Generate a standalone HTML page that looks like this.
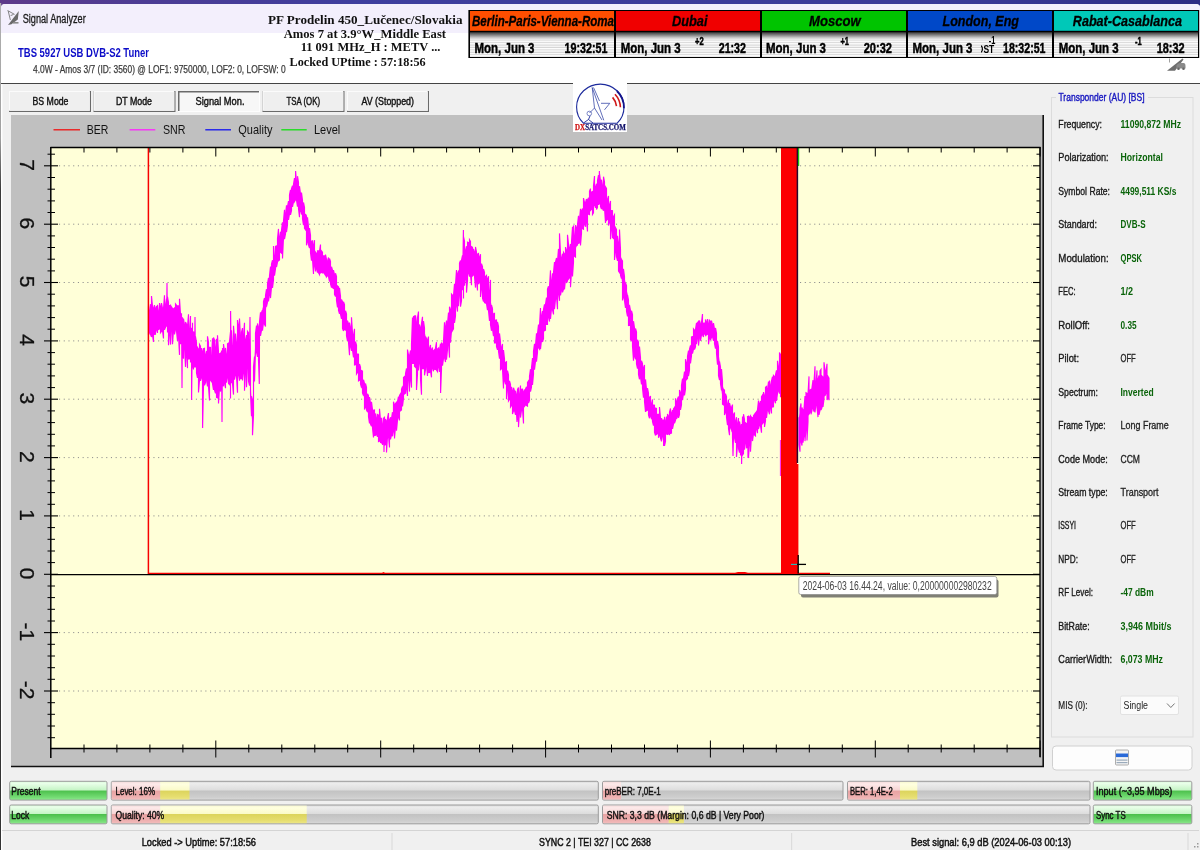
<!DOCTYPE html>
<html lang="en"><head><meta charset="utf-8"><title>Signal Analyzer</title>
<style>
html,body{margin:0;padding:0;background:#f0f0f0;overflow:hidden}
body{width:1200px;height:850px;position:relative;font-family:"Liberation Sans",Arial,sans-serif}
svg{position:absolute;left:0;top:0;display:block;filter:blur(0.3px)}
text{white-space:pre}
</style></head><body>
<svg width="1200" height="850" viewBox="0 0 1200 850">
<defs>
<linearGradient id="gGreen" x1="0" y1="0" x2="0" y2="1">
<stop offset="0" stop-color="#d6f8d6"/><stop offset="0.1" stop-color="#eaffea"/><stop offset="0.48" stop-color="#c4f4c4"/><stop offset="0.5" stop-color="#4cc04c"/><stop offset="0.85" stop-color="#74dc74"/><stop offset="1" stop-color="#8ee88e"/>
</linearGradient>
<linearGradient id="gGray" x1="0" y1="0" x2="0" y2="1">
<stop offset="0" stop-color="#d8d8d8"/><stop offset="0.12" stop-color="#ececec"/><stop offset="0.48" stop-color="#dcdcdc"/><stop offset="0.5" stop-color="#c2c2c2"/><stop offset="0.85" stop-color="#cecece"/><stop offset="1" stop-color="#dadada"/>
</linearGradient>
<linearGradient id="gRed" x1="0" y1="0" x2="0" y2="1">
<stop offset="0" stop-color="#f6dcdc"/><stop offset="0.12" stop-color="#fdeaea"/><stop offset="0.48" stop-color="#f6d2d2"/><stop offset="0.5" stop-color="#e8a2a2"/><stop offset="0.85" stop-color="#eeb0b0"/><stop offset="1" stop-color="#f2bcbc"/>
</linearGradient>
<linearGradient id="gYel" x1="0" y1="0" x2="0" y2="1">
<stop offset="0" stop-color="#f8f8d0"/><stop offset="0.12" stop-color="#ffffe0"/><stop offset="0.48" stop-color="#fafac8"/><stop offset="0.5" stop-color="#dcd45c"/><stop offset="0.85" stop-color="#e6de70"/><stop offset="1" stop-color="#ece684"/>
</linearGradient>
<linearGradient id="gShade" x1="0" y1="0" x2="0" y2="1">
<stop offset="0" stop-color="#484848"/><stop offset="0.3" stop-color="#8c8c8c"/><stop offset="0.6" stop-color="#cfcfcf"/><stop offset="0.85" stop-color="#f0f0f0" stop-opacity="0.8"/><stop offset="1" stop-color="#ffffff" stop-opacity="0"/>
</linearGradient>
<pattern id="stripes" x="0" y="0" width="4" height="2.4" patternUnits="userSpaceOnUse">
<rect x="0" y="0" width="4" height="2.4" fill="#fff"/><rect x="0" y="1.3" width="4" height="1.1" fill="#d2d2d2"/>
</pattern>
</defs>

<linearGradient id="gDesk" x1="0" y1="0" x2="1" y2="0"><stop offset="0" stop-color="#5e3a8a"/><stop offset="0.12" stop-color="#4c3c94"/><stop offset="0.3" stop-color="#3e3e9e"/><stop offset="0.8" stop-color="#3a3a98"/><stop offset="1" stop-color="#2c2c84"/></linearGradient>
<linearGradient id="gEdge" x1="0" y1="0" x2="0" y2="1"><stop offset="0" stop-color="#b0b0b0"/><stop offset="0.16" stop-color="#a0a0a0"/><stop offset="0.22" stop-color="#3a3a3a"/><stop offset="1" stop-color="#333"/></linearGradient>
<rect x="0.0" y="0.0" width="1200.0" height="850.0" fill="url(#gDesk)"/>
<rect x="0.0" y="3.0" width="1.2" height="847.0" fill="url(#gEdge)"/>
<path d="M1 850 V8 Q1 4 5 4 H1196 Q1200.2 4 1200.2 8.5 V850 Z" fill="#f0f0f0"/>
<path d="M1 33.7 V8 Q1 4 5 4 H1196 Q1200.2 4 1200.2 8.5 V33.7 Z" fill="#f3effc"/>
<rect x="1.0" y="33.0" width="1199.0" height="50.0" fill="#ffffff"/>
<rect x="1.0" y="83.0" width="1.4" height="767.0" fill="#ffffff"/>
<line x1="1.0" y1="83.5" x2="1200.0" y2="83.5" stroke="#444" stroke-width="1.2"/>
<g><path d="M18.8 11 L8 25 L11.5 24.3 L17.8 19.5 Z" fill="#6a6a6a"/><path d="M7.5 10.5 L14.6 14.4 M8.2 11 L10.4 20 M10.6 15.6 l3 -1.2" stroke="#777" stroke-width="0.9" fill="none"/><path d="M13 22 h5.5 v1.6 h-5.5z" fill="#888"/></g>
<text x="22.7" y="23.0" font-family="Liberation Sans, Arial, sans-serif" font-size="12.0" font-weight="normal" font-style="normal" fill="#1a1a1a" textLength="63.0" lengthAdjust="spacingAndGlyphs" stroke="#1a1a1a" stroke-width="0.3">Signal Analyzer</text>
<text x="18.0" y="56.5" font-family="Liberation Sans, Arial, sans-serif" font-size="12.5" font-weight="bold" font-style="normal" fill="#0c0cc8" textLength="131.0" lengthAdjust="spacingAndGlyphs">TBS 5927 USB DVB-S2 Tuner</text>
<text x="33.0" y="73.0" font-family="Liberation Sans, Arial, sans-serif" font-size="10.5" font-weight="normal" font-style="normal" fill="#3c3c3c" textLength="252.7" lengthAdjust="spacingAndGlyphs" stroke="#3c3c3c" stroke-width="0.25">4.0W - Amos 3/7 (ID: 3560) @ LOF1: 9750000, LOF2: 0, LOFSW: 0</text>
<text x="268.0" y="23.8" font-family="Liberation Serif, Times New Roman, serif" font-size="13.0" font-weight="bold" font-style="normal" fill="#111" textLength="194.5" lengthAdjust="spacingAndGlyphs">PF Prodelin 450_Lučenec/Slovakia</text>
<text x="283.7" y="37.5" font-family="Liberation Serif, Times New Roman, serif" font-size="13.0" font-weight="bold" font-style="normal" fill="#111" textLength="162.3" lengthAdjust="spacingAndGlyphs">Amos 7 at 3.9°W_Middle East</text>
<text x="300.7" y="51.0" font-family="Liberation Serif, Times New Roman, serif" font-size="13.0" font-weight="bold" font-style="normal" fill="#111" textLength="139.8" lengthAdjust="spacingAndGlyphs">11 091 MHz_H : METV ...</text>
<text x="289.5" y="65.5" font-family="Liberation Serif, Times New Roman, serif" font-size="13.0" font-weight="bold" font-style="normal" fill="#111" textLength="136.2" lengthAdjust="spacingAndGlyphs">Locked UPtime : 57:18:56</text>
<rect x="468.4" y="10.0" width="730.8" height="48.0" fill="#000"/>
<rect x="470.0" y="11.0" width="144.0" height="19.8" fill="#ff4e00"/>
<rect x="470.0" y="32.8" width="144.0" height="24.2" fill="url(#stripes)"/>
<rect x="470.0" y="32.8" width="144.0" height="8.5" fill="url(#gShade)"/>
<rect x="616.0" y="11.0" width="144.0" height="19.8" fill="#f00000"/>
<rect x="616.0" y="32.8" width="144.0" height="24.2" fill="url(#stripes)"/>
<rect x="616.0" y="32.8" width="144.0" height="8.5" fill="url(#gShade)"/>
<rect x="762.0" y="11.0" width="144.0" height="19.8" fill="#00c400"/>
<rect x="762.0" y="32.8" width="144.0" height="24.2" fill="url(#stripes)"/>
<rect x="762.0" y="32.8" width="144.0" height="8.5" fill="url(#gShade)"/>
<rect x="908.0" y="11.0" width="144.0" height="19.8" fill="#0048c8"/>
<rect x="908.0" y="32.8" width="144.0" height="24.2" fill="url(#stripes)"/>
<rect x="908.0" y="32.8" width="144.0" height="8.5" fill="url(#gShade)"/>
<rect x="1054.0" y="11.0" width="144.0" height="19.8" fill="#00c8b8"/>
<rect x="1054.0" y="32.8" width="144.0" height="24.2" fill="url(#stripes)"/>
<rect x="1054.0" y="32.8" width="144.0" height="8.5" fill="url(#gShade)"/>
<text x="472.0" y="25.6" font-family="Liberation Sans, Arial, sans-serif" font-size="14.8" font-weight="bold" font-style="italic" fill="#000" textLength="142.0" lengthAdjust="spacingAndGlyphs" stroke="#000" stroke-width="0.3">Berlin-Paris-Vienna-Roma</text>
<text x="672.0" y="25.6" font-family="Liberation Sans, Arial, sans-serif" font-size="14.8" font-weight="bold" font-style="italic" fill="#000" textLength="35.5" lengthAdjust="spacingAndGlyphs" stroke="#000" stroke-width="0.3">Dubai</text>
<text x="809.0" y="25.6" font-family="Liberation Sans, Arial, sans-serif" font-size="14.8" font-weight="bold" font-style="italic" fill="#000" textLength="51.7" lengthAdjust="spacingAndGlyphs" stroke="#000" stroke-width="0.3">Moscow</text>
<text x="942.5" y="25.6" font-family="Liberation Sans, Arial, sans-serif" font-size="14.8" font-weight="bold" font-style="italic" fill="#000" textLength="76.5" lengthAdjust="spacingAndGlyphs" stroke="#000" stroke-width="0.3">London, Eng</text>
<text x="1072.8" y="25.6" font-family="Liberation Sans, Arial, sans-serif" font-size="14.8" font-weight="bold" font-style="italic" fill="#000" textLength="109.2" lengthAdjust="spacingAndGlyphs" stroke="#000" stroke-width="0.3">Rabat-Casablanca</text>
<text x="474.5" y="52.5" font-family="Liberation Sans, Arial, sans-serif" font-size="15.0" font-weight="bold" font-style="normal" fill="#000" textLength="60.0" lengthAdjust="spacingAndGlyphs" stroke="#000" stroke-width="0.45">Mon, Jun 3</text>
<text x="564.5" y="52.5" font-family="Liberation Sans, Arial, sans-serif" font-size="15.0" font-weight="bold" font-style="normal" fill="#000" textLength="43.0" lengthAdjust="spacingAndGlyphs" stroke="#000" stroke-width="0.45">19:32:51</text>
<text x="620.7" y="52.5" font-family="Liberation Sans, Arial, sans-serif" font-size="15.0" font-weight="bold" font-style="normal" fill="#000" textLength="60.0" lengthAdjust="spacingAndGlyphs" stroke="#000" stroke-width="0.45">Mon, Jun 3</text>
<text x="695.0" y="44.5" font-family="Liberation Sans, Arial, sans-serif" font-size="10.0" font-weight="bold" font-style="normal" fill="#000" textLength="8.7" lengthAdjust="spacingAndGlyphs" stroke="#000" stroke-width="0.45">+2</text>
<text x="718.7" y="52.5" font-family="Liberation Sans, Arial, sans-serif" font-size="15.0" font-weight="bold" font-style="normal" fill="#000" textLength="27.3" lengthAdjust="spacingAndGlyphs" stroke="#000" stroke-width="0.45">21:32</text>
<text x="766.0" y="52.5" font-family="Liberation Sans, Arial, sans-serif" font-size="15.0" font-weight="bold" font-style="normal" fill="#000" textLength="60.0" lengthAdjust="spacingAndGlyphs" stroke="#000" stroke-width="0.45">Mon, Jun 3</text>
<text x="840.5" y="44.5" font-family="Liberation Sans, Arial, sans-serif" font-size="10.0" font-weight="bold" font-style="normal" fill="#000" textLength="8.5" lengthAdjust="spacingAndGlyphs" stroke="#000" stroke-width="0.45">+1</text>
<text x="863.7" y="52.5" font-family="Liberation Sans, Arial, sans-serif" font-size="15.0" font-weight="bold" font-style="normal" fill="#000" textLength="28.3" lengthAdjust="spacingAndGlyphs" stroke="#000" stroke-width="0.45">20:32</text>
<text x="912.5" y="52.5" font-family="Liberation Sans, Arial, sans-serif" font-size="15.0" font-weight="bold" font-style="normal" fill="#000" textLength="60.0" lengthAdjust="spacingAndGlyphs" stroke="#000" stroke-width="0.45">Mon, Jun 3</text>
<text x="988.8" y="43.8" font-family="Liberation Sans, Arial, sans-serif" font-size="10.0" font-weight="bold" font-style="normal" fill="#000" textLength="6.6" lengthAdjust="spacingAndGlyphs">-1</text>
<clipPath id="cDST"><rect x="981" y="44" width="16" height="12"/></clipPath>
<text x="977.3" y="53.4" font-family="Liberation Sans, Arial, sans-serif" font-size="10.5" font-weight="bold" font-style="normal" fill="#000" textLength="16.9" lengthAdjust="spacingAndGlyphs" clip-path="url(#cDST)">DST</text>
<text x="1003.0" y="52.5" font-family="Liberation Sans, Arial, sans-serif" font-size="15.0" font-weight="bold" font-style="normal" fill="#000" textLength="42.5" lengthAdjust="spacingAndGlyphs" stroke="#000" stroke-width="0.45">18:32:51</text>
<text x="1058.7" y="52.5" font-family="Liberation Sans, Arial, sans-serif" font-size="15.0" font-weight="bold" font-style="normal" fill="#000" textLength="60.0" lengthAdjust="spacingAndGlyphs" stroke="#000" stroke-width="0.45">Mon, Jun 3</text>
<text x="1135.0" y="44.5" font-family="Liberation Sans, Arial, sans-serif" font-size="10.0" font-weight="bold" font-style="normal" fill="#000" textLength="6.7" lengthAdjust="spacingAndGlyphs" stroke="#000" stroke-width="0.45">-1</text>
<text x="1156.7" y="52.5" font-family="Liberation Sans, Arial, sans-serif" font-size="15.0" font-weight="bold" font-style="normal" fill="#000" textLength="28.0" lengthAdjust="spacingAndGlyphs" stroke="#000" stroke-width="0.45">18:32</text>
<g fill="#6e6e6e"><path d="M1167 70.8 L1182.5 58.6 L1183.5 59.6 L1175 70.8 Z"/><path d="M1169.5 58.5 v4" stroke="#888" stroke-width="0.8"/><path d="M1176.5 65.5 q1 -2.5 3.5 -2.5 h3.5 q2 0 2 3 v2.5 h-9z" fill="#8a8a8a"/><circle cx="1178.5" cy="68.8" r="1.3" fill="#666"/><circle cx="1183.5" cy="68.8" r="1.3" fill="#666"/></g>
<rect x="9.0" y="91.0" width="82.0" height="21.0" fill="#6a6a6a"/>
<rect x="9.0" y="91.0" width="80.8" height="19.8" fill="#fbfbfb"/>
<rect x="10.0" y="92.0" width="79.8" height="18.8" fill="#efefef"/>
<text x="32.5" y="104.5" font-family="Liberation Sans, Arial, sans-serif" font-size="10.5" font-weight="normal" font-style="normal" fill="#111" textLength="36.0" lengthAdjust="spacingAndGlyphs" stroke="#111" stroke-width="0.4">BS Mode</text>
<rect x="93.5" y="91.0" width="82.0" height="21.0" fill="#6a6a6a"/>
<rect x="93.5" y="91.0" width="80.8" height="19.8" fill="#fbfbfb"/>
<rect x="94.5" y="92.0" width="79.8" height="18.8" fill="#efefef"/>
<text x="116.0" y="104.5" font-family="Liberation Sans, Arial, sans-serif" font-size="10.5" font-weight="normal" font-style="normal" fill="#111" textLength="36.0" lengthAdjust="spacingAndGlyphs" stroke="#111" stroke-width="0.4">DT Mode</text>
<rect x="178.0" y="91.0" width="82.0" height="21.0" fill="#fdfdfd"/>
<rect x="178.0" y="91.0" width="81.0" height="20.0" fill="#6a6a6a"/>
<rect x="179.5" y="92.5" width="79.5" height="18.5" fill="#f7f7f7"/>
<text x="195.5" y="105.0" font-family="Liberation Sans, Arial, sans-serif" font-size="10.5" font-weight="normal" font-style="normal" fill="#111" textLength="49.0" lengthAdjust="spacingAndGlyphs" stroke="#111" stroke-width="0.4">Signal Mon.</text>
<rect x="262.5" y="91.0" width="82.0" height="21.0" fill="#6a6a6a"/>
<rect x="262.5" y="91.0" width="80.8" height="19.8" fill="#fbfbfb"/>
<rect x="263.5" y="92.0" width="79.8" height="18.8" fill="#efefef"/>
<text x="286.5" y="104.5" font-family="Liberation Sans, Arial, sans-serif" font-size="10.5" font-weight="normal" font-style="normal" fill="#111" textLength="33.5" lengthAdjust="spacingAndGlyphs" stroke="#111" stroke-width="0.4">TSA (OK)</text>
<rect x="347.0" y="91.0" width="82.0" height="21.0" fill="#6a6a6a"/>
<rect x="347.0" y="91.0" width="80.8" height="19.8" fill="#fbfbfb"/>
<rect x="348.0" y="92.0" width="79.8" height="18.8" fill="#efefef"/>
<text x="361.5" y="104.5" font-family="Liberation Sans, Arial, sans-serif" font-size="10.5" font-weight="normal" font-style="normal" fill="#111" textLength="52.5" lengthAdjust="spacingAndGlyphs" stroke="#111" stroke-width="0.4">AV (Stopped)</text>
<rect x="11.0" y="115.0" width="1032.0" height="651.5" fill="#c0c0c0"/>
<line x1="11.0" y1="766.5" x2="1044.0" y2="766.5" stroke="#111" stroke-width="1.6"/>
<line x1="1043.2" y1="115.0" x2="1043.2" y2="767.0" stroke="#111" stroke-width="1.6"/>
<rect x="51.0" y="147.5" width="989.0" height="601.0" fill="#ffffd8"/>
<line x1="59.0" y1="691.0" x2="1032.0" y2="691.0" stroke="#8c8c8c" stroke-width="1" stroke-dasharray="1.1 3.62"/>
<line x1="59.0" y1="632.6" x2="1032.0" y2="632.6" stroke="#8c8c8c" stroke-width="1" stroke-dasharray="1.1 3.62"/>
<line x1="59.0" y1="515.9" x2="1032.0" y2="515.9" stroke="#8c8c8c" stroke-width="1" stroke-dasharray="1.1 3.62"/>
<line x1="59.0" y1="457.6" x2="1032.0" y2="457.6" stroke="#8c8c8c" stroke-width="1" stroke-dasharray="1.1 3.62"/>
<line x1="59.0" y1="399.2" x2="1032.0" y2="399.2" stroke="#8c8c8c" stroke-width="1" stroke-dasharray="1.1 3.62"/>
<line x1="59.0" y1="340.9" x2="1032.0" y2="340.9" stroke="#8c8c8c" stroke-width="1" stroke-dasharray="1.1 3.62"/>
<line x1="59.0" y1="282.5" x2="1032.0" y2="282.5" stroke="#8c8c8c" stroke-width="1" stroke-dasharray="1.1 3.62"/>
<line x1="59.0" y1="224.2" x2="1032.0" y2="224.2" stroke="#8c8c8c" stroke-width="1" stroke-dasharray="1.1 3.62"/>
<line x1="59.0" y1="165.8" x2="1032.0" y2="165.8" stroke="#8c8c8c" stroke-width="1" stroke-dasharray="1.1 3.62"/>
<line x1="53.5" y1="129.8" x2="80.0" y2="129.8" stroke="#f01010" stroke-width="1.3"/>
<text x="86.7" y="134.2" font-family="Liberation Sans, Arial, sans-serif" font-size="13.0" font-weight="normal" font-style="normal" fill="#111" textLength="21.6" lengthAdjust="spacingAndGlyphs">BER</text>
<line x1="129.6" y1="129.8" x2="155.3" y2="129.8" stroke="#ff20ff" stroke-width="1.3"/>
<text x="163.0" y="134.2" font-family="Liberation Sans, Arial, sans-serif" font-size="13.0" font-weight="normal" font-style="normal" fill="#111" textLength="22.5" lengthAdjust="spacingAndGlyphs">SNR</text>
<line x1="205.3" y1="129.8" x2="231.0" y2="129.8" stroke="#1010f0" stroke-width="1.3"/>
<text x="238.3" y="134.2" font-family="Liberation Sans, Arial, sans-serif" font-size="13.0" font-weight="normal" font-style="normal" fill="#111" textLength="34.2" lengthAdjust="spacingAndGlyphs">Quality</text>
<line x1="281.3" y1="129.8" x2="306.7" y2="129.8" stroke="#10e010" stroke-width="1.3"/>
<text x="314.0" y="134.2" font-family="Liberation Sans, Arial, sans-serif" font-size="13.0" font-weight="normal" font-style="normal" fill="#111" textLength="26.3" lengthAdjust="spacingAndGlyphs">Level</text>
<polygon points="148.5,315.4 149.5,314.6 150.5,314.8 151.5,315.8 152.5,315.8 153.5,315.6 154.5,314.7 155.5,315.3 156.5,314.0 157.5,314.0 158.5,313.0 159.5,313.2 160.5,314.6 161.5,313.6 162.5,313.3 163.5,311.5 164.5,311.1 165.5,311.7 166.5,309.6 167.5,310.5 168.5,310.7 169.5,310.4 170.5,312.4 171.5,312.3 172.5,312.4 173.5,312.4 174.5,314.3 175.5,315.6 176.5,316.9 177.5,316.7 178.5,318.0 179.5,320.0 180.5,321.8 181.5,322.7 182.5,325.2 183.5,327.9 184.5,327.9 185.5,329.0 186.5,331.9 187.5,334.6 188.5,335.8 189.5,337.8 190.5,339.3 191.5,340.2 192.5,342.8 193.5,343.1 194.5,344.0 195.5,347.3 196.5,348.9 197.5,349.0 198.5,353.1 199.5,354.8 200.5,355.6 201.5,359.2 202.5,359.9 203.5,359.2 204.5,360.7 205.5,360.5 206.5,360.0 207.5,360.3 208.5,362.0 209.5,363.1 210.5,363.5 211.5,363.2 212.5,363.1 213.5,364.4 214.5,364.3 215.5,364.4 216.5,362.1 217.5,362.8 218.5,362.0 219.5,360.1 220.5,360.9 221.5,361.7 222.5,360.4 223.5,358.4 224.5,360.6 225.5,358.4 226.5,357.7 227.5,357.1 228.5,355.4 229.5,356.8 230.5,356.5 231.5,354.6 232.5,354.6 233.5,352.4 234.5,351.6 235.5,351.0 236.5,352.3 237.5,351.1 238.5,351.5 239.5,349.9 240.5,346.8 241.5,346.1 242.5,345.3 243.5,347.3 244.5,347.1 245.5,345.5 246.5,344.6 247.5,344.9 248.5,346.2 249.5,358.7 250.5,373.8 251.5,403.6 252.5,414.4 253.5,383.3 254.5,360.6 255.5,335.8 256.5,335.8 257.5,331.9 258.5,330.6 259.5,325.0 260.5,321.8 261.5,317.7 262.5,308.6 263.5,305.2 264.5,300.9 265.5,294.9 266.5,292.1 267.5,287.4 268.5,282.7 269.5,278.4 270.5,273.4 271.5,268.8 272.5,265.4 273.5,261.2 274.5,257.3 275.5,253.6 276.5,251.1 277.5,246.7 278.5,241.0 279.5,238.4 280.5,233.7 281.5,231.2 282.5,226.9 283.5,221.4 284.5,218.1 285.5,213.2 286.5,210.2 287.5,206.6 288.5,202.9 289.5,199.0 290.5,194.5 291.5,190.0 292.5,187.9 293.5,184.8 294.5,184.3 295.5,182.0 296.5,184.4 297.5,185.4 298.5,189.9 299.5,191.4 300.5,194.2 301.5,199.9 302.5,203.3 303.5,205.6 304.5,211.9 305.5,214.8 306.5,219.9 307.5,222.8 308.5,227.7 309.5,233.6 310.5,236.3 311.5,242.2 312.5,243.8 313.5,248.2 314.5,251.0 315.5,253.0 316.5,254.2 317.5,253.9 318.5,256.3 319.5,255.9 320.5,257.7 321.5,256.9 322.5,259.1 323.5,258.4 324.5,260.4 325.5,261.1 326.5,260.8 327.5,261.2 328.5,263.5 329.5,265.2 330.5,268.6 331.5,271.1 332.5,272.8 333.5,274.0 334.5,277.1 335.5,280.4 336.5,284.1 337.5,286.2 338.5,291.1 339.5,292.5 340.5,296.2 341.5,300.5 342.5,304.3 343.5,306.8 344.5,311.3 345.5,313.6 346.5,317.9 347.5,322.4 348.5,325.4 349.5,327.6 350.5,330.9 351.5,331.4 352.5,336.5 353.5,340.6 354.5,345.1 355.5,349.0 356.5,351.1 357.5,357.3 358.5,361.3 359.5,366.3 360.5,369.1 361.5,374.0 362.5,378.7 363.5,382.6 364.5,386.9 365.5,390.3 366.5,393.1 367.5,395.6 368.5,398.7 369.5,402.6 370.5,403.9 371.5,407.7 372.5,412.6 373.5,413.2 374.5,415.7 375.5,418.5 376.5,418.5 377.5,418.8 378.5,420.5 379.5,421.3 380.5,423.7 381.5,425.1 382.5,426.3 383.5,426.1 384.5,425.9 385.5,425.2 386.5,423.3 387.5,423.1 388.5,421.5 389.5,420.3 390.5,421.0 391.5,418.2 392.5,416.3 393.5,414.4 394.5,411.9 395.5,408.6 396.5,406.3 397.5,405.2 398.5,400.9 399.5,398.9 400.5,397.0 401.5,391.0 402.5,386.8 403.5,383.1 404.5,379.1 405.5,373.6 406.5,369.2 407.5,367.9 408.5,361.6 409.5,359.3 410.5,356.6 411.5,347.4 412.5,332.9 413.5,327.4 414.5,327.6 415.5,326.7 416.5,330.4 417.5,328.2 418.5,331.6 419.5,329.2 420.5,331.8 421.5,331.3 422.5,333.9 423.5,329.3 424.5,331.3 425.5,335.9 426.5,342.7 427.5,342.9 428.5,347.2 429.5,349.1 430.5,351.3 431.5,352.2 432.5,353.4 433.5,353.2 434.5,354.3 435.5,353.4 436.5,353.8 437.5,351.6 438.5,351.0 439.5,349.8 440.5,348.5 441.5,348.6 442.5,344.1 443.5,341.7 444.5,338.6 445.5,332.2 446.5,329.1 447.5,324.7 448.5,321.6 449.5,316.6 450.5,310.3 451.5,303.4 452.5,300.5 453.5,296.8 454.5,291.1 455.5,286.6 456.5,280.0 457.5,274.1 458.5,270.8 459.5,268.3 460.5,267.1 461.5,259.9 462.5,259.4 463.5,255.0 464.5,255.7 465.5,253.8 466.5,250.0 467.5,249.0 468.5,251.3 469.5,247.3 470.5,249.0 471.5,250.3 472.5,249.1 473.5,248.9 474.5,253.0 475.5,252.7 476.5,253.1 477.5,256.6 478.5,259.6 479.5,263.5 480.5,264.9 481.5,265.4 482.5,269.8 483.5,269.9 484.5,274.3 485.5,277.2 486.5,282.3 487.5,286.1 488.5,291.8 489.5,293.9 490.5,298.8 491.5,305.9 492.5,307.8 493.5,314.8 494.5,318.7 495.5,323.2 496.5,326.1 497.5,331.5 498.5,335.2 499.5,338.3 500.5,342.3 501.5,347.6 502.5,350.4 503.5,355.2 504.5,361.5 505.5,365.5 506.5,369.2 507.5,374.4 508.5,377.3 509.5,383.3 510.5,386.7 511.5,389.9 512.5,393.2 513.5,392.5 514.5,393.8 515.5,393.9 516.5,396.9 517.5,395.5 518.5,395.7 519.5,396.4 520.5,396.9 521.5,396.5 522.5,393.6 523.5,391.8 524.5,391.8 525.5,388.7 526.5,388.8 527.5,385.2 528.5,383.0 529.5,377.0 530.5,373.1 531.5,366.7 532.5,363.6 533.5,355.6 534.5,350.8 535.5,346.7 536.5,339.4 537.5,336.3 538.5,331.8 539.5,329.5 540.5,323.0 541.5,319.5 542.5,318.6 543.5,312.4 544.5,310.7 545.5,306.7 546.5,300.9 547.5,297.5 548.5,293.6 549.5,290.7 550.5,287.7 551.5,280.9 552.5,279.1 553.5,274.3 554.5,270.9 555.5,264.6 556.5,258.6 557.5,261.7 558.5,262.1 559.5,257.9 560.5,259.9 561.5,257.2 562.5,255.8 563.5,255.6 564.5,254.1 565.5,254.8 566.5,253.4 567.5,254.9 568.5,254.6 569.5,252.1 570.5,250.8 571.5,247.0 572.5,242.6 573.5,238.6 574.5,237.0 575.5,232.5 576.5,231.6 577.5,227.8 578.5,221.5 579.5,218.1 580.5,214.7 581.5,214.4 582.5,209.9 583.5,208.8 584.5,207.7 585.5,205.7 586.5,203.1 587.5,199.5 588.5,199.3 589.5,194.9 590.5,194.4 591.5,191.9 592.5,193.2 593.5,191.1 594.5,189.4 595.5,189.8 596.5,188.1 597.5,187.4 598.5,186.3 599.5,185.2 600.5,184.7 601.5,187.2 602.5,187.1 603.5,190.3 604.5,191.0 605.5,193.9 606.5,196.6 607.5,200.9 608.5,201.7 609.5,206.4 610.5,208.3 611.5,212.0 612.5,213.5 613.5,219.1 614.5,221.9 615.5,229.4 616.5,232.0 617.5,239.0 618.5,242.7 619.5,248.1 620.5,253.7 621.5,259.2 622.5,265.9 623.5,269.6 624.5,277.6 625.5,282.4 626.5,289.8 627.5,293.5 628.5,301.9 629.5,305.2 630.5,310.9 631.5,317.7 632.5,322.5 633.5,327.0 634.5,330.8 635.5,335.1 636.5,341.4 637.5,344.8 638.5,348.8 639.5,354.7 640.5,359.5 641.5,365.6 642.5,370.6 643.5,374.1 644.5,378.7 645.5,383.3 646.5,388.9 647.5,392.7 648.5,394.1 649.5,397.1 650.5,400.3 651.5,404.5 652.5,406.4 653.5,408.0 654.5,411.1 655.5,415.1 656.5,414.5 657.5,415.4 658.5,416.9 659.5,419.0 660.5,421.1 661.5,421.5 662.5,424.1 663.5,425.0 664.5,422.6 665.5,422.7 666.5,421.5 667.5,418.8 668.5,416.8 669.5,416.3 670.5,416.3 671.5,413.6 672.5,411.3 673.5,408.4 674.5,407.8 675.5,405.2 676.5,402.1 677.5,399.6 678.5,397.7 679.5,395.5 680.5,393.9 681.5,391.1 682.5,384.7 683.5,380.1 684.5,376.3 685.5,370.1 686.5,367.0 687.5,361.9 688.5,356.7 689.5,350.9 690.5,346.0 691.5,342.5 692.5,337.4 693.5,334.5 694.5,330.7 695.5,330.2 696.5,329.3 697.5,326.3 698.5,325.1 699.5,324.0 700.5,325.1 701.5,325.1 702.5,323.9 703.5,324.2 704.5,323.9 705.5,321.8 706.5,323.8 707.5,323.5 708.5,323.2 709.5,324.7 710.5,325.6 711.5,324.4 712.5,326.5 713.5,326.5 714.5,329.3 715.5,333.5 716.5,338.8 717.5,346.2 718.5,352.8 719.5,360.4 720.5,368.5 721.5,375.5 722.5,384.6 723.5,388.3 724.5,392.2 725.5,397.8 726.5,400.1 727.5,403.7 728.5,406.3 729.5,410.4 730.5,411.3 731.5,413.4 732.5,416.2 733.5,417.6 734.5,420.6 735.5,421.7 736.5,423.8 737.5,425.3 738.5,426.0 739.5,427.1 740.5,427.1 741.5,429.2 742.5,426.2 743.5,425.4 744.5,427.0 745.5,425.2 746.5,422.9 747.5,424.8 748.5,421.1 749.5,423.2 750.5,422.0 751.5,418.1 752.5,417.3 753.5,415.9 754.5,416.1 755.5,412.6 756.5,412.5 757.5,411.9 758.5,409.6 759.5,407.9 760.5,404.5 761.5,402.8 762.5,403.3 763.5,400.1 764.5,398.4 765.5,395.8 766.5,392.7 767.5,390.9 768.5,391.8 769.5,387.1 770.5,388.0 771.5,384.1 772.5,383.1 773.5,379.9 774.5,377.8 775.5,375.2 776.5,370.8 777.5,370.9 778.5,368.5 779.5,363.2 780.5,361.0 780.5,384.1 779.5,388.2 778.5,390.3 777.5,391.8 776.5,393.3 775.5,394.2 774.5,399.4 773.5,401.1 772.5,401.8 771.5,404.8 770.5,405.2 769.5,408.5 768.5,407.2 767.5,408.6 766.5,409.9 765.5,411.9 764.5,415.0 763.5,416.7 762.5,417.1 761.5,419.3 760.5,420.4 759.5,421.5 758.5,424.4 757.5,424.8 756.5,427.0 755.5,428.1 754.5,429.5 753.5,431.8 752.5,435.3 751.5,437.0 750.5,436.1 749.5,438.0 748.5,441.5 747.5,442.2 746.5,443.2 745.5,443.9 744.5,444.1 743.5,445.5 742.5,446.1 741.5,444.6 740.5,443.8 739.5,445.5 738.5,441.0 737.5,443.0 736.5,440.8 735.5,438.5 734.5,438.1 733.5,436.1 732.5,433.6 731.5,431.7 730.5,428.3 729.5,426.6 728.5,422.3 727.5,419.2 726.5,417.2 725.5,411.1 724.5,406.6 723.5,403.3 722.5,398.7 721.5,390.6 720.5,382.6 719.5,374.3 718.5,368.2 717.5,360.1 716.5,350.4 715.5,344.8 714.5,342.0 713.5,338.2 712.5,337.0 711.5,336.3 710.5,336.3 709.5,334.7 708.5,334.0 707.5,334.6 706.5,334.2 705.5,332.8 704.5,333.7 703.5,334.6 702.5,333.9 701.5,335.0 700.5,336.2 699.5,336.3 698.5,336.1 697.5,337.2 696.5,340.1 695.5,341.5 694.5,345.1 693.5,347.0 692.5,349.2 691.5,356.2 690.5,359.8 689.5,363.9 688.5,369.7 687.5,373.9 686.5,378.8 685.5,382.7 684.5,388.1 683.5,394.7 682.5,398.3 681.5,402.4 680.5,405.6 679.5,409.7 678.5,412.9 677.5,413.3 676.5,415.0 675.5,417.7 674.5,421.6 673.5,423.5 672.5,424.9 671.5,427.1 670.5,430.0 669.5,431.1 668.5,431.5 667.5,432.3 666.5,434.0 665.5,436.0 664.5,437.6 663.5,438.8 662.5,435.5 661.5,434.6 660.5,433.1 659.5,433.6 658.5,430.3 657.5,429.3 656.5,427.7 655.5,427.0 654.5,426.7 653.5,422.1 652.5,421.8 651.5,419.3 650.5,416.4 649.5,414.4 648.5,409.3 647.5,407.5 646.5,402.9 645.5,400.4 644.5,393.4 643.5,388.5 642.5,385.1 641.5,380.3 640.5,374.4 639.5,369.9 638.5,367.1 637.5,360.6 636.5,357.1 635.5,351.7 634.5,348.3 633.5,344.6 632.5,340.1 631.5,336.3 630.5,328.9 629.5,322.8 628.5,318.9 627.5,314.3 626.5,306.1 625.5,300.7 624.5,295.0 623.5,288.6 622.5,285.6 621.5,277.9 620.5,272.3 619.5,268.6 618.5,262.3 617.5,255.7 616.5,253.7 615.5,245.2 614.5,242.8 613.5,235.7 612.5,232.9 611.5,227.5 610.5,225.1 609.5,222.4 608.5,220.2 607.5,215.8 606.5,211.4 605.5,210.6 604.5,207.2 603.5,205.3 602.5,201.9 601.5,200.7 600.5,201.9 599.5,199.0 598.5,200.5 597.5,202.7 596.5,201.9 595.5,204.2 594.5,203.5 593.5,206.0 592.5,205.7 591.5,208.1 590.5,208.2 589.5,209.9 588.5,212.7 587.5,214.6 586.5,218.2 585.5,219.4 584.5,222.2 583.5,225.4 582.5,226.1 581.5,230.6 580.5,231.9 579.5,235.2 578.5,239.5 577.5,241.8 576.5,245.7 575.5,251.1 574.5,254.1 573.5,255.1 572.5,260.9 571.5,264.0 570.5,271.5 569.5,272.0 568.5,275.9 567.5,274.7 566.5,276.0 565.5,278.4 564.5,279.5 563.5,280.2 562.5,285.6 561.5,286.1 560.5,286.1 559.5,287.6 558.5,289.3 557.5,288.2 556.5,295.1 555.5,297.2 554.5,297.6 553.5,297.9 552.5,304.6 551.5,304.3 550.5,308.7 549.5,311.7 548.5,316.9 547.5,320.1 546.5,321.1 545.5,325.7 544.5,328.1 543.5,334.0 542.5,335.4 541.5,336.9 540.5,342.0 539.5,345.4 538.5,346.9 537.5,352.4 536.5,357.2 535.5,361.2 534.5,368.3 533.5,371.4 532.5,376.0 531.5,381.0 530.5,388.4 529.5,391.3 528.5,396.1 527.5,400.4 526.5,401.8 525.5,403.9 524.5,406.8 523.5,406.7 522.5,408.2 521.5,409.9 520.5,409.2 519.5,410.4 518.5,410.9 517.5,410.1 516.5,412.6 515.5,410.0 514.5,411.3 513.5,410.2 512.5,406.8 511.5,402.8 510.5,402.6 509.5,397.2 508.5,394.8 507.5,389.0 506.5,384.0 505.5,382.3 504.5,377.5 503.5,371.6 502.5,367.7 501.5,363.2 500.5,360.8 499.5,354.8 498.5,351.4 497.5,346.2 496.5,345.8 495.5,339.9 494.5,337.5 493.5,330.7 492.5,328.9 491.5,322.8 490.5,319.3 489.5,315.6 488.5,310.6 487.5,304.4 486.5,300.9 485.5,298.0 484.5,291.6 483.5,292.0 482.5,287.9 481.5,285.9 480.5,286.2 479.5,283.5 478.5,280.3 477.5,279.0 476.5,276.6 475.5,274.2 474.5,270.7 473.5,270.6 472.5,272.6 471.5,272.4 470.5,268.0 469.5,269.5 468.5,271.2 467.5,270.1 466.5,275.6 465.5,275.7 464.5,276.6 463.5,278.9 462.5,283.9 461.5,284.6 460.5,288.4 459.5,291.7 458.5,295.7 457.5,299.9 456.5,306.9 455.5,308.5 454.5,312.4 453.5,317.2 452.5,322.1 451.5,330.8 450.5,331.9 449.5,339.7 448.5,340.7 447.5,345.6 446.5,349.2 445.5,352.3 444.5,356.8 443.5,358.1 442.5,360.1 441.5,361.8 440.5,364.7 439.5,365.2 438.5,365.1 437.5,367.7 436.5,369.9 435.5,369.9 434.5,370.0 433.5,367.3 432.5,367.1 431.5,368.9 430.5,368.2 429.5,365.1 428.5,366.1 427.5,366.4 426.5,364.7 425.5,363.0 424.5,364.1 423.5,359.9 422.5,363.8 421.5,364.4 420.5,361.2 419.5,360.8 418.5,362.1 417.5,358.8 416.5,364.5 415.5,363.1 414.5,361.6 413.5,359.1 412.5,361.4 411.5,367.5 410.5,373.1 409.5,374.1 408.5,379.5 407.5,381.6 406.5,387.1 405.5,388.9 404.5,392.8 403.5,397.9 402.5,401.4 401.5,406.7 400.5,409.5 399.5,412.0 398.5,415.3 397.5,417.6 396.5,419.6 395.5,423.5 394.5,426.1 393.5,427.8 392.5,431.8 391.5,431.5 390.5,432.9 389.5,434.0 388.5,434.7 387.5,437.2 386.5,438.9 385.5,438.0 384.5,441.1 383.5,441.0 382.5,440.5 381.5,438.0 380.5,436.0 379.5,436.8 378.5,436.3 377.5,435.0 376.5,433.9 375.5,431.9 374.5,431.6 373.5,429.1 372.5,426.7 371.5,423.1 370.5,418.7 369.5,416.2 368.5,414.8 367.5,411.2 366.5,407.8 365.5,403.4 364.5,398.6 363.5,395.6 362.5,391.0 361.5,387.6 360.5,383.4 359.5,378.9 358.5,374.7 357.5,372.3 356.5,367.0 355.5,364.0 354.5,358.4 353.5,354.3 352.5,349.5 351.5,347.3 350.5,345.1 349.5,340.4 348.5,339.3 347.5,334.4 346.5,331.5 345.5,328.8 344.5,325.9 343.5,322.8 342.5,318.0 341.5,315.4 340.5,310.8 339.5,306.4 338.5,303.9 337.5,300.6 336.5,295.7 335.5,292.2 334.5,289.6 333.5,287.5 332.5,285.0 331.5,282.2 330.5,279.7 329.5,277.4 328.5,274.6 327.5,275.0 326.5,272.9 325.5,273.5 324.5,272.9 323.5,272.1 322.5,271.7 321.5,269.8 320.5,268.2 319.5,269.1 318.5,269.0 317.5,266.7 316.5,267.7 315.5,264.2 314.5,263.4 313.5,259.7 312.5,259.2 311.5,255.9 310.5,250.4 309.5,245.6 308.5,241.7 307.5,236.2 306.5,232.8 305.5,228.7 304.5,224.9 303.5,221.9 302.5,216.9 301.5,214.1 300.5,210.1 299.5,204.3 298.5,202.7 297.5,200.1 296.5,196.5 295.5,192.9 294.5,196.0 293.5,197.9 292.5,202.6 291.5,204.2 290.5,210.0 289.5,214.3 288.5,217.3 287.5,221.9 286.5,225.5 285.5,229.4 284.5,234.4 283.5,237.6 282.5,240.9 281.5,245.7 280.5,250.4 279.5,253.5 278.5,257.6 277.5,261.3 276.5,266.3 275.5,268.3 274.5,271.7 273.5,277.3 272.5,282.5 271.5,286.5 270.5,289.0 269.5,294.7 268.5,297.7 267.5,302.8 266.5,306.4 265.5,310.8 264.5,317.4 263.5,322.1 262.5,325.8 261.5,326.7 260.5,332.6 259.5,337.6 258.5,341.9 257.5,344.9 256.5,345.5 255.5,346.9 254.5,372.7 253.5,395.4 252.5,425.0 251.5,414.1 250.5,385.6 249.5,373.0 248.5,359.4 247.5,360.6 246.5,360.5 245.5,362.7 244.5,361.3 243.5,362.2 242.5,363.4 241.5,366.3 240.5,365.2 239.5,366.8 238.5,366.1 237.5,366.0 236.5,368.4 235.5,369.9 234.5,370.8 233.5,372.0 232.5,370.0 231.5,372.4 230.5,373.0 229.5,372.2 228.5,373.9 227.5,375.4 226.5,372.8 225.5,373.7 224.5,376.8 223.5,374.6 222.5,375.3 221.5,375.2 220.5,376.8 219.5,378.8 218.5,376.4 217.5,377.5 216.5,377.2 215.5,379.9 214.5,378.3 213.5,377.4 212.5,376.8 211.5,376.9 210.5,376.3 209.5,377.8 208.5,376.8 207.5,377.7 206.5,377.4 205.5,374.9 204.5,376.3 203.5,376.3 202.5,374.8 201.5,372.4 200.5,370.1 199.5,368.8 198.5,366.2 197.5,364.0 196.5,364.2 195.5,361.0 194.5,360.4 193.5,358.8 192.5,355.8 191.5,355.2 190.5,351.7 189.5,351.5 188.5,347.9 187.5,347.2 186.5,346.0 185.5,343.2 184.5,343.4 183.5,340.8 182.5,338.9 181.5,337.9 180.5,334.8 179.5,333.4 178.5,330.9 177.5,329.8 176.5,328.3 175.5,326.7 174.5,326.8 173.5,324.8 172.5,324.6 171.5,325.6 170.5,324.3 169.5,324.1 168.5,322.6 167.5,322.8 166.5,322.4 165.5,322.4 164.5,322.5 163.5,323.8 162.5,324.9 161.5,326.0 160.5,324.8 159.5,325.5 158.5,325.0 157.5,326.0 156.5,327.4 155.5,325.7 154.5,327.2 153.5,325.6 152.5,326.5 151.5,326.7 150.5,326.5 149.5,325.9 148.5,326.1" fill="#ff00ff"/>
<polygon points="799.0,417.0 800.0,413.1 801.0,411.9 802.0,414.3 803.0,409.3 804.0,409.0 805.0,406.4 806.0,402.0 807.0,398.8 808.0,398.1 809.0,396.5 810.0,392.4 811.0,392.4 812.0,388.4 813.0,389.1 814.0,384.4 815.0,385.3 816.0,382.3 817.0,383.6 818.0,382.2 819.0,380.1 820.0,379.9 821.0,376.7 822.0,379.8 823.0,379.2 824.0,375.2 825.0,375.7 826.0,377.1 827.0,378.3 828.0,378.2 829.0,379.1 829.0,394.0 828.0,392.0 827.0,392.7 826.0,394.5 825.0,394.9 824.0,397.4 823.0,396.9 822.0,400.4 821.0,400.6 820.0,399.5 819.0,400.0 818.0,401.3 817.0,401.2 816.0,404.7 815.0,403.1 814.0,404.3 813.0,406.6 812.0,408.5 811.0,409.4 810.0,411.9 809.0,415.0 808.0,415.8 807.0,419.7 806.0,422.9 805.0,427.3 804.0,434.9 803.0,438.5 802.0,438.5 801.0,438.4 800.0,440.0 799.0,442.9" fill="#ff00ff"/>
<g shape-rendering="auto">
<polyline points="148.5,306.4 148.5,335.0 149.5,332.7 149.5,311.6 150.5,304.2 150.5,334.3 151.5,337.1 151.5,296.1 152.5,306.0 152.5,335.1 153.5,342.0 153.5,308.3 154.5,305.1 154.5,334.4 155.5,334.3 155.5,308.4 156.5,305.9 156.5,330.0 157.5,332.9 157.5,304.8 158.5,311.8 158.5,329.6 159.5,329.0 159.5,303.1 160.5,306.5 160.5,332.6 161.5,331.2 161.5,303.1 162.5,308.4 162.5,330.5 163.5,338.5 163.5,308.6 164.5,295.2 164.5,329.8 165.5,327.4 165.5,305.1 166.5,298.5 166.5,326.8 167.0,283.0 167.5,332.4 167.5,296.9 168.5,302.2 168.5,345.2 169.5,333.7 169.5,305.6 170.5,305.1 170.5,344.6 171.5,329.3 171.5,306.9 172.5,308.5 172.5,344.2 173.5,330.6 173.5,308.8 174.5,308.0 174.5,334.5 175.5,329.3 175.5,303.9 176.5,305.1 176.5,331.2 177.5,341.0 177.5,305.8 178.5,305.8 178.5,335.8 179.5,354.9 179.5,298.7 180.5,313.7 180.5,344.0 181.5,341.0 181.5,313.2 182.0,388.0 182.5,317.3 182.5,345.4 183.5,358.7 183.5,318.5 184.5,325.4 184.5,345.9 185.5,366.9 185.5,322.1 186.5,324.1 186.5,355.2 187.5,368.1 187.5,326.7 188.5,314.3 188.5,359.0 189.5,358.8 189.5,330.5 190.5,316.1 190.5,361.9 191.5,361.9 191.5,327.8 191.6,400.0 192.5,322.8 192.5,363.1 193.5,369.5 193.5,331.4 194.5,336.7 194.5,367.6 195.0,317.0 195.5,367.4 195.5,336.7 196.5,342.6 196.5,372.9 197.5,377.8 197.5,347.4 198.5,349.1 198.5,392.5 199.5,380.6 199.5,344.4 200.5,346.1 200.5,380.7 201.5,377.7 201.5,348.1 202.5,351.5 202.5,389.1 202.6,428.0 203.5,386.1 203.5,348.7 204.5,348.3 204.5,385.3 205.5,382.6 205.5,354.8 206.5,350.9 206.5,379.7 207.5,386.4 207.5,336.3 208.5,342.2 208.5,386.9 209.5,400.4 209.5,347.3 210.5,347.5 210.5,380.3 211.5,381.6 211.5,358.2 212.5,338.3 212.5,383.8 213.5,389.9 213.5,337.6 214.5,339.8 214.5,390.2 215.5,393.4 215.5,348.6 216.5,338.8 216.5,397.3 217.5,397.8 217.5,335.3 218.5,351.7 218.5,403.5 219.5,387.9 219.5,353.9 220.5,353.1 220.5,391.6 221.5,380.0 221.5,350.4 222.0,422.0 222.5,348.1 222.5,383.1 223.5,386.2 223.5,344.1 224.5,350.7 224.5,383.0 225.5,388.2 225.5,347.9 226.5,355.1 226.5,382.6 227.5,377.1 227.5,343.8 228.5,343.1 228.5,383.5 229.5,384.5 229.5,341.9 230.5,331.7 230.5,398.5 230.6,311.0 231.5,383.3 231.5,330.2 232.5,348.5 232.5,383.8 233.5,394.6 233.5,325.8 234.5,337.9 234.5,379.7 235.5,374.4 235.5,333.5 236.5,343.6 236.5,376.6 237.5,392.8 237.5,320.0 238.5,325.2 238.5,374.4 239.5,380.7 239.5,318.6 240.5,337.9 240.5,378.7 241.5,378.5 241.5,332.0 242.5,328.1 242.5,380.4 243.5,372.0 243.5,336.2 244.5,322.7 244.5,390.8 245.5,371.9 245.5,340.1 246.5,335.1 246.5,387.2 247.5,365.1 247.5,331.4 248.5,332.8 248.5,381.3 249.5,385.6 249.5,350.5 250.0,317.0 250.5,365.6 250.5,393.7 251.5,416.2 251.5,396.2 252.5,400.1 252.5,435.3 253.5,415.4 253.5,366.7 254.5,356.5 254.5,381.4 255.5,350.4 255.5,333.2 256.5,325.5 256.5,352.3 257.5,356.9 257.5,323.5 258.5,327.4 258.5,360.3 259.3,384.0 259.5,340.5 259.5,321.8 260.5,312.3 260.5,335.8 261.5,330.5 261.5,312.4 262.5,310.0 262.5,330.6 263.5,322.5 263.5,301.7 264.5,298.0 264.5,324.3 265.5,326.5 265.5,295.6 266.5,289.2 266.5,306.7 267.5,302.0 267.5,284.1 268.5,277.8 268.5,301.3 269.5,294.1 269.5,275.8 270.5,266.6 270.5,298.1 271.5,287.1 271.5,264.1 272.5,260.2 272.5,287.9 273.5,280.3 273.5,246.1 274.5,257.4 274.5,275.7 275.5,268.9 275.5,246.3 276.5,245.9 276.5,267.1 277.5,262.3 277.5,238.9 278.5,228.9 278.5,260.8 279.5,260.0 279.5,237.3 280.5,231.7 280.5,252.3 281.5,253.2 281.5,230.0 282.5,222.2 282.5,258.4 283.5,238.0 283.5,220.8 284.5,209.7 284.5,239.1 285.5,233.9 285.5,214.8 286.5,205.2 286.5,232.2 287.5,224.9 287.5,206.8 288.5,201.0 288.5,220.0 289.5,213.8 289.5,194.8 290.5,189.8 290.5,214.9 291.5,210.7 291.5,188.7 292.5,185.6 292.5,206.8 293.5,201.6 293.5,184.4 294.5,178.0 294.5,201.6 295.5,199.9 295.5,181.0 295.6,171.0 296.5,181.9 296.5,200.1 297.5,206.7 297.5,176.2 298.5,182.3 298.5,208.6 299.5,217.2 299.5,186.2 300.5,193.7 300.5,210.4 301.5,214.3 301.5,192.5 302.5,200.2 302.5,218.7 303.5,225.2 303.5,202.4 304.5,207.3 304.5,228.3 305.5,229.7 305.5,214.1 306.5,216.2 306.5,245.3 307.5,241.6 307.5,217.3 308.5,226.7 308.5,245.0 309.5,248.0 309.5,228.0 310.5,235.4 310.5,252.8 311.5,260.7 311.5,241.4 312.5,240.9 312.5,259.6 313.5,273.9 313.5,245.4 314.5,240.2 314.5,265.4 315.5,271.5 315.5,252.0 316.5,253.4 316.5,268.7 317.5,272.6 317.5,250.8 318.5,250.6 318.5,272.9 319.5,274.6 319.5,251.0 320.5,244.5 320.5,273.0 321.5,272.5 321.5,251.0 322.5,252.3 322.5,272.9 323.5,272.9 323.5,255.9 324.5,255.9 324.5,273.8 325.5,275.3 325.5,254.5 326.5,259.0 326.5,276.9 327.5,275.8 327.5,261.2 328.5,257.4 328.5,276.6 329.5,281.6 329.5,258.5 330.5,261.4 330.5,284.0 331.5,287.6 331.5,266.7 332.5,270.2 332.5,287.6 333.5,288.3 333.5,270.1 334.5,274.5 334.5,294.3 335.5,296.4 335.5,273.2 336.5,276.3 336.5,300.5 337.5,307.5 337.5,286.0 338.5,286.8 338.5,310.4 339.5,313.8 339.5,287.8 340.5,296.4 340.5,314.5 341.5,318.9 341.5,299.5 342.5,301.7 342.5,328.5 343.5,331.1 343.5,301.7 344.5,304.7 344.5,329.7 345.5,330.1 345.5,310.8 346.5,313.9 346.5,336.0 347.5,341.0 347.5,320.6 348.5,323.9 348.5,342.3 349.5,355.3 349.5,322.5 350.5,327.6 350.5,346.4 351.5,351.0 351.5,317.3 352.5,332.8 352.5,350.2 353.5,357.5 353.5,335.8 354.5,328.8 354.5,364.9 355.5,364.6 355.5,341.6 356.5,345.2 356.5,374.0 357.5,372.3 357.5,353.9 358.5,354.2 358.5,381.0 359.5,380.3 359.5,364.0 360.5,367.2 360.5,383.9 361.5,387.6 361.5,370.6 362.5,371.2 362.5,393.2 363.5,395.6 363.5,379.7 364.5,383.3 364.5,409.6 365.5,407.2 365.5,383.5 366.5,387.3 366.5,410.0 367.5,411.9 367.5,393.8 368.5,395.7 368.5,416.8 369.5,423.4 369.5,397.1 370.5,402.8 370.5,424.1 371.5,426.3 371.5,401.8 372.5,409.6 372.5,428.3 373.5,437.5 373.5,410.2 374.5,410.0 374.5,435.6 375.5,435.4 375.5,413.4 376.5,418.5 376.5,434.3 377.5,436.8 377.5,414.4 378.5,415.0 378.5,441.6 379.5,441.1 379.5,408.7 380.5,420.1 380.5,442.5 381.5,443.0 381.5,417.8 382.5,424.7 382.5,444.9 383.5,441.8 383.5,417.6 384.0,452.0 384.5,416.4 384.5,445.2 385.5,444.6 385.5,419.0 386.5,421.2 386.5,452.5 387.5,436.9 387.5,417.5 388.5,413.0 388.5,436.3 389.5,447.4 389.5,419.8 390.5,417.3 390.5,439.4 391.5,435.1 391.5,418.6 392.5,412.2 392.5,436.3 393.5,430.9 393.5,401.7 394.5,405.2 394.5,438.4 395.5,427.0 395.5,403.5 396.5,402.3 396.5,430.8 397.5,420.3 397.5,401.4 398.5,396.5 398.5,417.3 399.5,420.4 399.5,395.4 400.5,393.8 400.5,410.8 401.5,410.0 401.5,389.3 402.5,386.5 402.5,406.4 403.5,398.4 403.5,377.4 404.5,376.5 404.5,393.9 405.5,393.1 405.5,373.7 406.5,368.4 406.5,388.3 407.5,396.0 407.5,349.6 408.5,354.7 408.5,378.5 409.5,391.6 409.5,355.9 410.5,350.4 410.5,379.5 411.5,387.6 411.5,343.9 412.5,317.4 412.5,363.4 413.5,363.3 413.5,316.5 414.5,316.0 414.5,366.3 415.5,367.3 415.5,315.3 416.5,323.0 416.5,390.0 417.5,374.2 417.5,317.5 418.5,311.6 418.5,370.4 419.5,362.5 419.5,324.4 420.5,327.6 420.5,379.3 421.5,394.8 421.5,323.3 422.5,316.8 422.5,368.6 423.5,368.5 423.5,321.1 424.5,327.7 424.5,375.3 425.5,369.6 425.5,336.4 426.5,338.4 426.5,365.5 427.5,375.9 427.5,340.3 428.5,336.6 428.5,372.5 429.5,372.4 429.5,348.3 430.5,345.0 430.5,371.1 431.5,377.3 431.5,349.4 432.5,347.4 432.5,368.1 433.5,371.2 433.5,350.7 434.5,349.7 434.5,369.1 435.5,369.4 435.5,347.8 436.5,342.2 436.5,370.2 437.5,371.7 437.5,348.9 438.5,348.0 438.5,366.6 439.5,372.0 439.5,350.3 440.5,343.7 440.5,364.7 440.6,393.0 441.5,369.7 441.5,342.4 442.5,344.5 442.5,365.7 443.5,358.6 443.5,340.9 444.5,322.2 444.5,357.5 445.5,362.1 445.5,327.1 446.5,320.6 446.5,359.6 447.5,349.4 447.5,323.7 448.5,312.5 448.5,343.0 449.5,357.6 449.5,306.7 450.5,309.8 450.5,342.7 451.5,331.0 451.5,294.1 452.5,295.3 452.5,330.6 453.5,328.9 453.5,295.8 454.5,283.7 454.5,322.8 455.5,316.2 455.5,284.2 456.5,270.1 456.5,304.4 457.5,311.6 457.5,274.1 458.5,270.7 458.5,306.2 459.5,293.9 459.5,263.1 460.5,260.4 460.5,306.7 461.5,301.0 461.5,260.1 462.5,255.4 462.5,290.2 463.4,230.0 463.5,298.6 463.5,236.6 464.5,241.0 464.5,285.6 465.5,278.4 465.5,250.6 466.5,246.2 466.5,292.6 467.5,280.7 467.5,242.1 468.5,242.6 468.5,272.9 469.5,276.7 469.5,239.6 470.5,241.3 470.5,275.3 471.5,285.2 471.5,246.6 472.5,247.4 472.5,275.9 473.5,274.9 473.5,248.8 474.5,252.0 474.5,276.6 475.5,287.6 475.5,246.9 476.5,252.1 476.5,281.3 477.5,290.5 477.5,254.0 478.5,253.4 478.5,283.5 479.5,282.4 479.5,257.4 480.5,254.2 480.5,296.9 481.5,288.5 481.5,263.6 482.5,266.6 482.5,298.2 483.5,301.5 483.5,268.9 484.5,272.4 484.5,302.7 485.5,303.1 485.5,276.4 486.5,275.4 486.5,303.8 487.5,310.2 487.5,278.8 488.5,276.3 488.5,310.6 489.5,320.9 489.5,292.7 490.5,279.9 490.5,324.8 491.5,330.8 491.5,304.9 492.5,309.1 492.5,329.0 493.5,336.2 493.5,313.8 494.5,313.4 494.5,342.8 495.5,342.7 495.5,320.2 496.5,319.9 496.5,346.7 497.5,349.9 497.5,321.8 498.5,326.3 498.5,351.2 499.5,358.6 499.5,333.4 500.5,341.7 500.5,369.7 501.5,368.7 501.5,347.6 502.5,343.9 502.5,369.2 503.5,388.4 503.5,350.1 504.5,358.9 504.5,380.6 505.5,384.4 505.5,362.4 506.5,361.8 506.5,399.2 507.5,389.2 507.5,370.6 508.5,374.8 508.5,401.0 509.5,399.3 509.5,380.8 510.5,384.4 510.5,407.1 511.5,405.5 511.5,386.8 512.5,391.0 512.5,414.0 513.5,410.9 513.5,387.8 514.5,390.9 514.5,410.6 515.5,414.9 515.5,390.7 516.5,394.7 516.5,413.8 517.0,422.0 517.5,418.3 517.5,389.5 518.5,387.6 518.5,427.1 519.5,411.2 519.5,395.3 520.5,385.6 520.5,417.6 521.5,410.1 521.5,389.2 522.5,389.1 522.5,409.1 523.5,423.5 523.5,391.8 524.5,389.4 524.5,406.3 525.5,405.0 525.5,389.1 526.5,386.8 526.5,405.4 527.5,406.1 527.5,382.5 528.5,380.9 528.5,403.1 529.5,400.3 529.5,376.4 530.5,369.2 530.5,391.6 531.5,387.3 531.5,367.9 532.5,358.1 532.5,385.0 533.5,374.3 533.5,351.3 534.5,343.7 534.5,369.8 535.5,361.4 535.5,345.5 536.5,333.2 536.5,361.6 537.5,352.2 537.5,333.9 538.5,324.6 538.5,347.5 539.5,349.1 539.5,325.4 540.5,308.1 540.5,349.1 541.5,340.2 541.5,315.9 542.5,310.9 542.5,342.0 543.5,338.6 543.5,309.4 544.5,304.3 544.5,330.7 545.5,330.1 545.5,304.2 546.5,297.5 546.5,324.2 547.5,324.3 547.5,289.0 548.5,286.2 548.5,317.1 549.5,321.6 549.5,286.4 550.5,270.4 550.5,318.9 551.5,308.8 551.5,281.4 552.5,273.3 552.5,309.9 553.5,314.5 553.5,272.5 554.5,262.0 554.5,309.2 555.5,299.5 555.5,262.0 556.5,257.9 556.5,296.9 557.5,309.2 557.5,261.0 558.5,248.9 558.5,293.7 559.5,300.8 559.5,233.4 560.5,252.8 560.5,295.3 561.5,289.9 561.5,258.1 562.5,253.7 562.5,292.4 563.5,289.5 563.5,252.3 564.5,254.0 564.5,289.5 565.5,279.1 565.5,247.1 566.5,250.4 566.5,283.0 567.5,280.8 567.5,234.8 568.5,244.0 568.5,279.1 569.5,277.8 569.5,248.2 570.5,243.9 570.5,287.2 571.5,272.1 571.5,242.1 572.5,226.8 572.5,276.5 573.5,262.3 573.5,225.4 574.5,236.9 574.5,256.3 575.5,257.1 575.5,225.1 576.5,227.7 576.5,245.8 577.5,245.0 577.5,224.6 578.5,215.8 578.5,243.3 579.5,242.9 579.5,219.5 580.5,208.7 580.5,245.5 581.5,233.6 581.5,210.8 582.5,208.6 582.5,228.6 583.5,229.2 583.5,198.1 584.5,202.4 584.5,224.5 585.5,226.8 585.5,202.5 586.5,198.9 586.5,221.3 587.5,231.5 587.5,200.0 588.5,197.7 588.5,214.2 589.5,214.6 589.5,191.2 590.5,188.6 590.5,210.4 591.5,209.2 591.5,192.1 592.5,191.5 592.5,214.4 593.5,212.8 593.5,185.9 594.5,176.1 594.5,204.5 595.5,207.9 595.5,186.9 596.5,183.7 596.5,209.4 597.5,207.4 597.5,180.5 598.5,175.2 598.5,205.0 599.4,171.0 599.5,204.5 599.5,173.5 600.5,180.8 600.5,206.6 601.5,208.9 601.5,179.7 602.5,185.9 602.5,208.6 603.5,210.8 603.5,176.7 604.5,181.7 604.5,208.0 605.5,223.0 605.5,186.8 606.5,188.4 606.5,220.4 607.5,219.2 607.5,199.4 608.5,195.9 608.5,225.6 609.5,222.3 609.5,204.9 610.5,200.9 610.5,239.2 611.5,229.0 611.5,210.4 612.5,210.7 612.5,237.4 613.5,238.4 613.5,216.6 614.5,214.8 614.5,259.9 615.5,251.3 615.5,227.7 616.5,229.5 616.5,256.7 617.5,260.8 617.5,235.8 618.5,243.6 618.5,271.0 619.5,272.5 619.5,229.6 620.5,249.6 620.5,275.3 621.5,278.6 621.5,259.3 622.5,260.8 622.5,300.4 623.5,297.3 623.5,269.1 624.5,276.5 624.5,301.0 625.5,307.8 625.5,282.6 626.5,285.5 626.5,311.2 627.5,316.4 627.5,294.8 628.5,300.0 628.5,325.5 629.5,325.3 629.5,305.2 630.5,310.5 630.5,339.5 631.5,340.5 631.5,310.7 632.5,314.5 632.5,346.5 633.5,360.7 633.5,321.2 634.5,327.8 634.5,356.5 635.5,359.2 635.5,328.4 636.5,331.9 636.5,363.9 637.5,368.6 637.5,339.8 638.5,342.2 638.5,374.5 639.5,379.3 639.5,346.5 640.5,357.7 640.5,377.3 641.5,384.4 641.5,360.8 642.5,363.7 642.5,388.2 643.5,397.7 643.5,367.7 644.5,365.0 644.5,401.5 645.5,411.9 645.5,379.4 646.5,389.3 646.5,410.7 647.5,410.2 647.5,388.1 648.5,393.0 648.5,415.1 649.5,418.2 649.5,398.0 650.5,396.1 650.5,415.9 651.5,418.9 651.5,403.8 652.5,399.4 652.5,421.8 653.5,425.6 653.5,404.9 654.5,405.1 654.5,432.5 655.5,435.6 655.5,408.1 656.5,408.5 656.5,434.3 657.5,433.6 657.5,414.3 658.5,414.3 658.5,437.7 659.5,435.4 659.5,407.1 660.5,418.0 660.5,438.1 661.5,441.4 661.5,418.1 662.5,420.6 662.5,436.3 663.5,440.5 663.5,419.4 663.6,446.0 664.5,416.8 664.5,446.0 665.5,441.5 665.5,421.2 666.5,416.5 666.5,433.9 667.5,434.3 667.5,414.0 668.5,416.1 668.5,434.0 669.5,434.6 669.5,412.1 670.5,408.4 670.5,433.4 671.5,433.1 671.5,413.1 672.5,409.9 672.5,429.0 673.5,424.1 673.5,409.0 674.5,407.5 674.5,423.3 675.5,420.5 675.5,398.3 676.5,401.7 676.5,419.1 677.5,416.4 677.5,398.9 678.5,396.5 678.5,417.9 679.5,414.6 679.5,389.9 680.5,392.7 680.5,410.0 681.5,404.9 681.5,385.3 682.5,378.6 682.5,400.2 683.5,393.5 683.5,378.7 684.5,371.5 684.5,395.4 685.5,389.2 685.5,359.2 686.5,363.0 686.5,379.6 687.5,378.6 687.5,356.4 688.5,350.6 688.5,376.1 689.5,370.3 689.5,349.1 690.5,345.4 690.5,363.4 691.5,355.6 691.5,336.9 692.5,336.6 692.5,353.5 693.5,349.1 693.5,328.9 694.5,330.1 694.5,349.5 695.5,346.8 695.5,329.3 696.5,322.8 696.5,344.2 697.5,338.0 697.5,322.8 698.5,321.5 698.5,345.6 699.5,336.7 699.5,320.4 700.5,324.3 700.5,340.8 701.5,335.0 701.5,322.3 702.5,314.1 702.5,334.9 703.5,337.0 703.5,323.2 704.5,322.9 704.5,333.9 705.5,335.2 705.5,319.4 706.5,322.2 706.5,334.9 707.5,334.2 707.5,319.0 708.5,324.1 708.5,344.3 709.5,337.1 709.5,320.3 710.5,321.5 710.5,340.3 711.5,337.5 711.5,320.6 712.5,325.3 712.5,336.7 713.5,340.8 713.5,323.1 714.5,329.0 714.5,343.6 715.5,348.6 715.5,327.9 716.5,333.2 716.5,353.2 717.5,364.6 717.5,340.8 718.5,346.8 718.5,375.8 719.5,380.1 719.5,361.4 720.5,367.1 720.5,383.6 721.5,390.4 721.5,369.0 722.5,381.6 722.5,404.2 723.5,404.9 723.5,389.3 724.5,390.0 724.5,415.0 725.5,412.5 725.5,393.6 726.5,396.6 726.5,417.1 727.5,425.2 727.5,404.8 728.5,399.5 728.5,428.6 729.5,435.2 729.5,403.0 730.5,407.1 730.5,427.2 731.5,429.9 731.5,407.4 732.5,404.6 732.5,437.7 733.0,456.0 733.5,436.3 733.5,414.3 734.5,412.4 734.5,437.8 735.5,442.9 735.5,421.3 736.5,417.2 736.5,456.9 737.5,444.9 737.5,423.8 738.5,418.1 738.5,448.7 739.5,452.6 739.5,421.4 740.5,426.5 740.5,454.7 741.5,454.3 741.5,424.0 741.6,464.0 742.5,416.5 742.5,455.1 743.5,453.6 743.5,414.2 744.5,419.2 744.5,449.6 745.5,442.4 745.5,422.7 746.5,423.6 746.5,448.3 747.5,445.3 747.5,415.9 748.0,458.0 748.5,415.5 748.5,457.7 749.5,443.3 749.5,417.1 750.5,415.7 750.5,451.8 751.5,435.5 751.5,417.1 752.5,418.1 752.5,441.1 753.5,433.8 753.5,415.8 754.5,414.4 754.5,435.0 755.5,435.9 755.5,413.1 756.5,411.6 756.5,429.3 757.5,433.2 757.5,409.7 758.5,400.6 758.5,429.0 759.5,424.9 759.5,403.8 760.5,401.0 760.5,425.9 761.5,432.7 761.5,396.7 762.5,395.0 762.5,424.4 763.5,421.6 763.5,392.1 764.5,395.7 764.5,427.0 765.5,421.0 765.5,387.3 766.5,386.5 766.5,418.0 767.5,409.4 767.5,390.1 768.5,381.6 768.5,411.0 769.5,414.3 769.5,380.6 770.5,385.6 770.5,407.9 771.5,413.5 771.5,380.7 772.5,376.6 772.5,407.1 773.5,406.8 773.5,375.4 774.5,376.4 774.5,400.2 775.5,403.2 775.5,374.8 776.5,370.3 776.5,400.8 777.5,393.5 777.5,360.8 778.5,367.0 778.5,390.9 779.5,393.6 779.5,352.6 780.5,354.6 780.5,397.3" fill="none" stroke="#ff00ff" stroke-width="1.15" stroke-linejoin="miter"/>
<polyline points="799.0,417.2 799.0,444.7 800.0,451.7 800.0,408.7 801.0,403.4 801.0,441.6 802.0,445.5 802.0,407.5 803.0,411.0 803.0,442.7 804.0,435.2 804.0,408.8 805.0,396.1 805.0,441.1 806.0,428.5 806.0,392.8 807.0,393.4 807.0,440.5 808.0,421.8 808.0,394.2 809.0,376.4 809.0,414.4 810.0,411.8 810.0,390.0 811.0,389.3 811.0,414.3 812.0,410.5 812.0,387.5 813.0,380.2 813.0,408.2 814.0,411.6 814.0,382.4 815.0,366.2 815.0,412.4 816.0,403.9 816.0,383.5 817.0,370.4 817.0,407.4 818.0,417.1 818.0,379.2 819.0,375.4 819.0,414.9 820.0,410.5 820.0,371.0 821.0,369.4 821.0,410.0 822.0,407.7 822.0,376.1 823.0,377.3 823.0,406.9 824.0,399.0 824.0,362.2 825.0,370.3 825.0,395.8 826.0,393.5 826.0,371.8 827.0,363.7 827.0,400.1 828.0,398.2 828.0,376.4 829.0,378.1 829.0,400.3" fill="none" stroke="#ff00ff" stroke-width="1.15" stroke-linejoin="miter"/>
</g>
<line x1="51.0" y1="574.6" x2="1040.0" y2="574.6" stroke="#000" stroke-width="1.3"/>
<line x1="148.4" y1="147.5" x2="148.4" y2="574.0" stroke="#f80000" stroke-width="1.5"/>
<line x1="148.0" y1="573.3" x2="830.0" y2="573.3" stroke="#f80000" stroke-width="1.3"/>
<path d="M735 573 l3 -1 h7 l3 1 z M382 573 l1.5 -1 l1.5 1z" fill="#f80000"/>
<rect x="781.0" y="147.5" width="16.0" height="426.5" fill="#fc0000"/>
<rect x="796.5" y="464.0" width="1.9" height="110.0" fill="#fc0000"/>
<line x1="780.4" y1="440.0" x2="780.4" y2="476.0" stroke="#ff00ff" stroke-width="0.9"/>
<line x1="797.4" y1="147.5" x2="797.4" y2="463.0" stroke="#28082e" stroke-width="1.5"/>
<line x1="798.6" y1="147.5" x2="798.6" y2="166.0" stroke="#18c018" stroke-width="1.2"/>
<line x1="50.8" y1="147.0" x2="50.8" y2="758.0" stroke="#000" stroke-width="1.5"/>
<line x1="1040.0" y1="147.0" x2="1040.0" y2="757.0" stroke="#000" stroke-width="1.4"/>
<line x1="50.5" y1="147.5" x2="1040.5" y2="147.5" stroke="#000" stroke-width="1.5"/>
<line x1="50.5" y1="748.5" x2="1040.5" y2="748.5" stroke="#000" stroke-width="1.5"/>
<line x1="84.0" y1="147.5" x2="84.0" y2="152.5" stroke="#000" stroke-width="1.0"/>
<line x1="84.0" y1="744.5" x2="84.0" y2="752.5" stroke="#000" stroke-width="1.0"/>
<line x1="116.9" y1="147.5" x2="116.9" y2="152.5" stroke="#000" stroke-width="1.0"/>
<line x1="116.9" y1="744.5" x2="116.9" y2="752.5" stroke="#000" stroke-width="1.0"/>
<line x1="149.9" y1="147.5" x2="149.9" y2="152.5" stroke="#000" stroke-width="1.0"/>
<line x1="149.9" y1="744.5" x2="149.9" y2="752.5" stroke="#000" stroke-width="1.0"/>
<line x1="182.9" y1="147.5" x2="182.9" y2="152.5" stroke="#000" stroke-width="1.0"/>
<line x1="182.9" y1="744.5" x2="182.9" y2="752.5" stroke="#000" stroke-width="1.0"/>
<line x1="215.8" y1="147.5" x2="215.8" y2="156.5" stroke="#000" stroke-width="1.0"/>
<line x1="215.8" y1="740.5" x2="215.8" y2="757.5" stroke="#000" stroke-width="1.0"/>
<line x1="248.8" y1="147.5" x2="248.8" y2="152.5" stroke="#000" stroke-width="1.0"/>
<line x1="248.8" y1="744.5" x2="248.8" y2="752.5" stroke="#000" stroke-width="1.0"/>
<line x1="281.8" y1="147.5" x2="281.8" y2="152.5" stroke="#000" stroke-width="1.0"/>
<line x1="281.8" y1="744.5" x2="281.8" y2="752.5" stroke="#000" stroke-width="1.0"/>
<line x1="314.8" y1="147.5" x2="314.8" y2="152.5" stroke="#000" stroke-width="1.0"/>
<line x1="314.8" y1="744.5" x2="314.8" y2="752.5" stroke="#000" stroke-width="1.0"/>
<line x1="347.7" y1="147.5" x2="347.7" y2="152.5" stroke="#000" stroke-width="1.0"/>
<line x1="347.7" y1="744.5" x2="347.7" y2="752.5" stroke="#000" stroke-width="1.0"/>
<line x1="380.7" y1="147.5" x2="380.7" y2="156.5" stroke="#000" stroke-width="1.0"/>
<line x1="380.7" y1="740.5" x2="380.7" y2="757.5" stroke="#000" stroke-width="1.0"/>
<line x1="413.7" y1="147.5" x2="413.7" y2="152.5" stroke="#000" stroke-width="1.0"/>
<line x1="413.7" y1="744.5" x2="413.7" y2="752.5" stroke="#000" stroke-width="1.0"/>
<line x1="446.6" y1="147.5" x2="446.6" y2="152.5" stroke="#000" stroke-width="1.0"/>
<line x1="446.6" y1="744.5" x2="446.6" y2="752.5" stroke="#000" stroke-width="1.0"/>
<line x1="479.6" y1="147.5" x2="479.6" y2="152.5" stroke="#000" stroke-width="1.0"/>
<line x1="479.6" y1="744.5" x2="479.6" y2="752.5" stroke="#000" stroke-width="1.0"/>
<line x1="512.6" y1="147.5" x2="512.6" y2="152.5" stroke="#000" stroke-width="1.0"/>
<line x1="512.6" y1="744.5" x2="512.6" y2="752.5" stroke="#000" stroke-width="1.0"/>
<line x1="545.6" y1="147.5" x2="545.6" y2="156.5" stroke="#000" stroke-width="1.0"/>
<line x1="545.6" y1="740.5" x2="545.6" y2="757.5" stroke="#000" stroke-width="1.0"/>
<line x1="578.5" y1="147.5" x2="578.5" y2="152.5" stroke="#000" stroke-width="1.0"/>
<line x1="578.5" y1="744.5" x2="578.5" y2="752.5" stroke="#000" stroke-width="1.0"/>
<line x1="611.5" y1="147.5" x2="611.5" y2="152.5" stroke="#000" stroke-width="1.0"/>
<line x1="611.5" y1="744.5" x2="611.5" y2="752.5" stroke="#000" stroke-width="1.0"/>
<line x1="644.5" y1="147.5" x2="644.5" y2="152.5" stroke="#000" stroke-width="1.0"/>
<line x1="644.5" y1="744.5" x2="644.5" y2="752.5" stroke="#000" stroke-width="1.0"/>
<line x1="677.4" y1="147.5" x2="677.4" y2="152.5" stroke="#000" stroke-width="1.0"/>
<line x1="677.4" y1="744.5" x2="677.4" y2="752.5" stroke="#000" stroke-width="1.0"/>
<line x1="710.4" y1="147.5" x2="710.4" y2="156.5" stroke="#000" stroke-width="1.0"/>
<line x1="710.4" y1="740.5" x2="710.4" y2="757.5" stroke="#000" stroke-width="1.0"/>
<line x1="743.4" y1="147.5" x2="743.4" y2="152.5" stroke="#000" stroke-width="1.0"/>
<line x1="743.4" y1="744.5" x2="743.4" y2="752.5" stroke="#000" stroke-width="1.0"/>
<line x1="776.3" y1="147.5" x2="776.3" y2="152.5" stroke="#000" stroke-width="1.0"/>
<line x1="776.3" y1="744.5" x2="776.3" y2="752.5" stroke="#000" stroke-width="1.0"/>
<line x1="809.3" y1="147.5" x2="809.3" y2="152.5" stroke="#000" stroke-width="1.0"/>
<line x1="809.3" y1="744.5" x2="809.3" y2="752.5" stroke="#000" stroke-width="1.0"/>
<line x1="842.3" y1="147.5" x2="842.3" y2="152.5" stroke="#000" stroke-width="1.0"/>
<line x1="842.3" y1="744.5" x2="842.3" y2="752.5" stroke="#000" stroke-width="1.0"/>
<line x1="875.3" y1="147.5" x2="875.3" y2="156.5" stroke="#000" stroke-width="1.0"/>
<line x1="875.3" y1="740.5" x2="875.3" y2="757.5" stroke="#000" stroke-width="1.0"/>
<line x1="908.2" y1="147.5" x2="908.2" y2="152.5" stroke="#000" stroke-width="1.0"/>
<line x1="908.2" y1="744.5" x2="908.2" y2="752.5" stroke="#000" stroke-width="1.0"/>
<line x1="941.2" y1="147.5" x2="941.2" y2="152.5" stroke="#000" stroke-width="1.0"/>
<line x1="941.2" y1="744.5" x2="941.2" y2="752.5" stroke="#000" stroke-width="1.0"/>
<line x1="974.2" y1="147.5" x2="974.2" y2="152.5" stroke="#000" stroke-width="1.0"/>
<line x1="974.2" y1="744.5" x2="974.2" y2="752.5" stroke="#000" stroke-width="1.0"/>
<line x1="1007.1" y1="147.5" x2="1007.1" y2="152.5" stroke="#000" stroke-width="1.0"/>
<line x1="1007.1" y1="744.5" x2="1007.1" y2="752.5" stroke="#000" stroke-width="1.0"/>
<line x1="1040.1" y1="147.5" x2="1040.1" y2="156.5" stroke="#000" stroke-width="1.0"/>
<line x1="1040.1" y1="740.5" x2="1040.1" y2="757.5" stroke="#000" stroke-width="1.0"/>
<line x1="47.5" y1="737.7" x2="55.0" y2="737.7" stroke="#000" stroke-width="1.0"/>
<line x1="1036.5" y1="737.7" x2="1040.0" y2="737.7" stroke="#000" stroke-width="1.0"/>
<line x1="47.5" y1="726.0" x2="55.0" y2="726.0" stroke="#000" stroke-width="1.0"/>
<line x1="1036.5" y1="726.0" x2="1040.0" y2="726.0" stroke="#000" stroke-width="1.0"/>
<line x1="47.5" y1="714.3" x2="55.0" y2="714.3" stroke="#000" stroke-width="1.0"/>
<line x1="1036.5" y1="714.3" x2="1040.0" y2="714.3" stroke="#000" stroke-width="1.0"/>
<line x1="47.5" y1="702.7" x2="55.0" y2="702.7" stroke="#000" stroke-width="1.0"/>
<line x1="1036.5" y1="702.7" x2="1040.0" y2="702.7" stroke="#000" stroke-width="1.0"/>
<line x1="44.0" y1="691.0" x2="58.0" y2="691.0" stroke="#000" stroke-width="1.1"/>
<line x1="1033.0" y1="691.0" x2="1040.0" y2="691.0" stroke="#000" stroke-width="1.1"/>
<line x1="47.5" y1="679.3" x2="55.0" y2="679.3" stroke="#000" stroke-width="1.0"/>
<line x1="1036.5" y1="679.3" x2="1040.0" y2="679.3" stroke="#000" stroke-width="1.0"/>
<line x1="47.5" y1="667.7" x2="55.0" y2="667.7" stroke="#000" stroke-width="1.0"/>
<line x1="1036.5" y1="667.7" x2="1040.0" y2="667.7" stroke="#000" stroke-width="1.0"/>
<line x1="47.5" y1="656.0" x2="55.0" y2="656.0" stroke="#000" stroke-width="1.0"/>
<line x1="1036.5" y1="656.0" x2="1040.0" y2="656.0" stroke="#000" stroke-width="1.0"/>
<line x1="47.5" y1="644.3" x2="55.0" y2="644.3" stroke="#000" stroke-width="1.0"/>
<line x1="1036.5" y1="644.3" x2="1040.0" y2="644.3" stroke="#000" stroke-width="1.0"/>
<line x1="44.0" y1="632.6" x2="58.0" y2="632.6" stroke="#000" stroke-width="1.1"/>
<line x1="1033.0" y1="632.6" x2="1040.0" y2="632.6" stroke="#000" stroke-width="1.1"/>
<line x1="47.5" y1="621.0" x2="55.0" y2="621.0" stroke="#000" stroke-width="1.0"/>
<line x1="1036.5" y1="621.0" x2="1040.0" y2="621.0" stroke="#000" stroke-width="1.0"/>
<line x1="47.5" y1="609.3" x2="55.0" y2="609.3" stroke="#000" stroke-width="1.0"/>
<line x1="1036.5" y1="609.3" x2="1040.0" y2="609.3" stroke="#000" stroke-width="1.0"/>
<line x1="47.5" y1="597.6" x2="55.0" y2="597.6" stroke="#000" stroke-width="1.0"/>
<line x1="1036.5" y1="597.6" x2="1040.0" y2="597.6" stroke="#000" stroke-width="1.0"/>
<line x1="47.5" y1="586.0" x2="55.0" y2="586.0" stroke="#000" stroke-width="1.0"/>
<line x1="1036.5" y1="586.0" x2="1040.0" y2="586.0" stroke="#000" stroke-width="1.0"/>
<line x1="44.0" y1="574.3" x2="58.0" y2="574.3" stroke="#000" stroke-width="1.1"/>
<line x1="1033.0" y1="574.3" x2="1040.0" y2="574.3" stroke="#000" stroke-width="1.1"/>
<line x1="47.5" y1="562.6" x2="55.0" y2="562.6" stroke="#000" stroke-width="1.0"/>
<line x1="1036.5" y1="562.6" x2="1040.0" y2="562.6" stroke="#000" stroke-width="1.0"/>
<line x1="47.5" y1="551.0" x2="55.0" y2="551.0" stroke="#000" stroke-width="1.0"/>
<line x1="1036.5" y1="551.0" x2="1040.0" y2="551.0" stroke="#000" stroke-width="1.0"/>
<line x1="47.5" y1="539.3" x2="55.0" y2="539.3" stroke="#000" stroke-width="1.0"/>
<line x1="1036.5" y1="539.3" x2="1040.0" y2="539.3" stroke="#000" stroke-width="1.0"/>
<line x1="47.5" y1="527.6" x2="55.0" y2="527.6" stroke="#000" stroke-width="1.0"/>
<line x1="1036.5" y1="527.6" x2="1040.0" y2="527.6" stroke="#000" stroke-width="1.0"/>
<line x1="44.0" y1="515.9" x2="58.0" y2="515.9" stroke="#000" stroke-width="1.1"/>
<line x1="1033.0" y1="515.9" x2="1040.0" y2="515.9" stroke="#000" stroke-width="1.1"/>
<line x1="47.5" y1="504.3" x2="55.0" y2="504.3" stroke="#000" stroke-width="1.0"/>
<line x1="1036.5" y1="504.3" x2="1040.0" y2="504.3" stroke="#000" stroke-width="1.0"/>
<line x1="47.5" y1="492.6" x2="55.0" y2="492.6" stroke="#000" stroke-width="1.0"/>
<line x1="1036.5" y1="492.6" x2="1040.0" y2="492.6" stroke="#000" stroke-width="1.0"/>
<line x1="47.5" y1="480.9" x2="55.0" y2="480.9" stroke="#000" stroke-width="1.0"/>
<line x1="1036.5" y1="480.9" x2="1040.0" y2="480.9" stroke="#000" stroke-width="1.0"/>
<line x1="47.5" y1="469.3" x2="55.0" y2="469.3" stroke="#000" stroke-width="1.0"/>
<line x1="1036.5" y1="469.3" x2="1040.0" y2="469.3" stroke="#000" stroke-width="1.0"/>
<line x1="44.0" y1="457.6" x2="58.0" y2="457.6" stroke="#000" stroke-width="1.1"/>
<line x1="1033.0" y1="457.6" x2="1040.0" y2="457.6" stroke="#000" stroke-width="1.1"/>
<line x1="47.5" y1="445.9" x2="55.0" y2="445.9" stroke="#000" stroke-width="1.0"/>
<line x1="1036.5" y1="445.9" x2="1040.0" y2="445.9" stroke="#000" stroke-width="1.0"/>
<line x1="47.5" y1="434.3" x2="55.0" y2="434.3" stroke="#000" stroke-width="1.0"/>
<line x1="1036.5" y1="434.3" x2="1040.0" y2="434.3" stroke="#000" stroke-width="1.0"/>
<line x1="47.5" y1="422.6" x2="55.0" y2="422.6" stroke="#000" stroke-width="1.0"/>
<line x1="1036.5" y1="422.6" x2="1040.0" y2="422.6" stroke="#000" stroke-width="1.0"/>
<line x1="47.5" y1="410.9" x2="55.0" y2="410.9" stroke="#000" stroke-width="1.0"/>
<line x1="1036.5" y1="410.9" x2="1040.0" y2="410.9" stroke="#000" stroke-width="1.0"/>
<line x1="44.0" y1="399.2" x2="58.0" y2="399.2" stroke="#000" stroke-width="1.1"/>
<line x1="1033.0" y1="399.2" x2="1040.0" y2="399.2" stroke="#000" stroke-width="1.1"/>
<line x1="47.5" y1="387.6" x2="55.0" y2="387.6" stroke="#000" stroke-width="1.0"/>
<line x1="1036.5" y1="387.6" x2="1040.0" y2="387.6" stroke="#000" stroke-width="1.0"/>
<line x1="47.5" y1="375.9" x2="55.0" y2="375.9" stroke="#000" stroke-width="1.0"/>
<line x1="1036.5" y1="375.9" x2="1040.0" y2="375.9" stroke="#000" stroke-width="1.0"/>
<line x1="47.5" y1="364.2" x2="55.0" y2="364.2" stroke="#000" stroke-width="1.0"/>
<line x1="1036.5" y1="364.2" x2="1040.0" y2="364.2" stroke="#000" stroke-width="1.0"/>
<line x1="47.5" y1="352.6" x2="55.0" y2="352.6" stroke="#000" stroke-width="1.0"/>
<line x1="1036.5" y1="352.6" x2="1040.0" y2="352.6" stroke="#000" stroke-width="1.0"/>
<line x1="44.0" y1="340.9" x2="58.0" y2="340.9" stroke="#000" stroke-width="1.1"/>
<line x1="1033.0" y1="340.9" x2="1040.0" y2="340.9" stroke="#000" stroke-width="1.1"/>
<line x1="47.5" y1="329.2" x2="55.0" y2="329.2" stroke="#000" stroke-width="1.0"/>
<line x1="1036.5" y1="329.2" x2="1040.0" y2="329.2" stroke="#000" stroke-width="1.0"/>
<line x1="47.5" y1="317.6" x2="55.0" y2="317.6" stroke="#000" stroke-width="1.0"/>
<line x1="1036.5" y1="317.6" x2="1040.0" y2="317.6" stroke="#000" stroke-width="1.0"/>
<line x1="47.5" y1="305.9" x2="55.0" y2="305.9" stroke="#000" stroke-width="1.0"/>
<line x1="1036.5" y1="305.9" x2="1040.0" y2="305.9" stroke="#000" stroke-width="1.0"/>
<line x1="47.5" y1="294.2" x2="55.0" y2="294.2" stroke="#000" stroke-width="1.0"/>
<line x1="1036.5" y1="294.2" x2="1040.0" y2="294.2" stroke="#000" stroke-width="1.0"/>
<line x1="44.0" y1="282.5" x2="58.0" y2="282.5" stroke="#000" stroke-width="1.1"/>
<line x1="1033.0" y1="282.5" x2="1040.0" y2="282.5" stroke="#000" stroke-width="1.1"/>
<line x1="47.5" y1="270.9" x2="55.0" y2="270.9" stroke="#000" stroke-width="1.0"/>
<line x1="1036.5" y1="270.9" x2="1040.0" y2="270.9" stroke="#000" stroke-width="1.0"/>
<line x1="47.5" y1="259.2" x2="55.0" y2="259.2" stroke="#000" stroke-width="1.0"/>
<line x1="1036.5" y1="259.2" x2="1040.0" y2="259.2" stroke="#000" stroke-width="1.0"/>
<line x1="47.5" y1="247.5" x2="55.0" y2="247.5" stroke="#000" stroke-width="1.0"/>
<line x1="1036.5" y1="247.5" x2="1040.0" y2="247.5" stroke="#000" stroke-width="1.0"/>
<line x1="47.5" y1="235.9" x2="55.0" y2="235.9" stroke="#000" stroke-width="1.0"/>
<line x1="1036.5" y1="235.9" x2="1040.0" y2="235.9" stroke="#000" stroke-width="1.0"/>
<line x1="44.0" y1="224.2" x2="58.0" y2="224.2" stroke="#000" stroke-width="1.1"/>
<line x1="1033.0" y1="224.2" x2="1040.0" y2="224.2" stroke="#000" stroke-width="1.1"/>
<line x1="47.5" y1="212.5" x2="55.0" y2="212.5" stroke="#000" stroke-width="1.0"/>
<line x1="1036.5" y1="212.5" x2="1040.0" y2="212.5" stroke="#000" stroke-width="1.0"/>
<line x1="47.5" y1="200.9" x2="55.0" y2="200.9" stroke="#000" stroke-width="1.0"/>
<line x1="1036.5" y1="200.9" x2="1040.0" y2="200.9" stroke="#000" stroke-width="1.0"/>
<line x1="47.5" y1="189.2" x2="55.0" y2="189.2" stroke="#000" stroke-width="1.0"/>
<line x1="1036.5" y1="189.2" x2="1040.0" y2="189.2" stroke="#000" stroke-width="1.0"/>
<line x1="47.5" y1="177.5" x2="55.0" y2="177.5" stroke="#000" stroke-width="1.0"/>
<line x1="1036.5" y1="177.5" x2="1040.0" y2="177.5" stroke="#000" stroke-width="1.0"/>
<line x1="44.0" y1="165.8" x2="58.0" y2="165.8" stroke="#000" stroke-width="1.1"/>
<line x1="1033.0" y1="165.8" x2="1040.0" y2="165.8" stroke="#000" stroke-width="1.1"/>
<line x1="47.5" y1="154.2" x2="55.0" y2="154.2" stroke="#000" stroke-width="1.0"/>
<line x1="1036.5" y1="154.2" x2="1040.0" y2="154.2" stroke="#000" stroke-width="1.0"/>
<text transform="translate(19.8 690.2) rotate(90)" text-anchor="middle" font-family="Liberation Sans, Arial, sans-serif" font-size="21" fill="#111" stroke="#111" stroke-width="0.3">-2</text>
<text transform="translate(19.8 631.9) rotate(90)" text-anchor="middle" font-family="Liberation Sans, Arial, sans-serif" font-size="21" fill="#111" stroke="#111" stroke-width="0.3">-1</text>
<text transform="translate(19.8 573.5) rotate(90)" text-anchor="middle" font-family="Liberation Sans, Arial, sans-serif" font-size="21" fill="#111" stroke="#111" stroke-width="0.3">0</text>
<text transform="translate(19.8 515.1) rotate(90)" text-anchor="middle" font-family="Liberation Sans, Arial, sans-serif" font-size="21" fill="#111" stroke="#111" stroke-width="0.3">1</text>
<text transform="translate(19.8 456.8) rotate(90)" text-anchor="middle" font-family="Liberation Sans, Arial, sans-serif" font-size="21" fill="#111" stroke="#111" stroke-width="0.3">2</text>
<text transform="translate(19.8 398.4) rotate(90)" text-anchor="middle" font-family="Liberation Sans, Arial, sans-serif" font-size="21" fill="#111" stroke="#111" stroke-width="0.3">3</text>
<text transform="translate(19.8 340.1) rotate(90)" text-anchor="middle" font-family="Liberation Sans, Arial, sans-serif" font-size="21" fill="#111" stroke="#111" stroke-width="0.3">4</text>
<text transform="translate(19.8 281.7) rotate(90)" text-anchor="middle" font-family="Liberation Sans, Arial, sans-serif" font-size="21" fill="#111" stroke="#111" stroke-width="0.3">5</text>
<text transform="translate(19.8 223.4) rotate(90)" text-anchor="middle" font-family="Liberation Sans, Arial, sans-serif" font-size="21" fill="#111" stroke="#111" stroke-width="0.3">6</text>
<text transform="translate(19.8 165.0) rotate(90)" text-anchor="middle" font-family="Liberation Sans, Arial, sans-serif" font-size="21" fill="#111" stroke="#111" stroke-width="0.3">7</text>
<line x1="791.0" y1="564.4" x2="797.5" y2="564.4" stroke="#20c0c0" stroke-width="1.1"/>
<line x1="797.0" y1="564.4" x2="806.0" y2="564.4" stroke="#000" stroke-width="1.3"/>
<line x1="798.2" y1="555.0" x2="798.2" y2="573.5" stroke="#000" stroke-width="1.3"/>
<rect x="801.0" y="579.5" width="197.5" height="18.0" fill="#555" opacity="0.75" rx="2"/>
<rect x="798.8" y="576.5" width="198.0" height="18.0" fill="#ffffff" stroke="#8a8a8a" stroke-width="0.7" rx="2"/>
<text x="802.8" y="589.7" font-family="Liberation Sans, Arial, sans-serif" font-size="12.0" font-weight="normal" font-style="normal" fill="#444" textLength="188.9" lengthAdjust="spacingAndGlyphs">2024-06-03 16.44.24, value: 0,200000002980232</text>
<rect x="573.0" y="80.5" width="54.0" height="51.5" fill="#ffffff"/>
<g fill="none" stroke="#1c2a9c" stroke-width="1.1">
<path d="M583.4 123.2 A23.7 23 0 1 1 617.2 123.2 Z"/>
<path d="M616.9 91 A23.7 23 0 0 1 623.9 108.3" stroke-width="1.8" stroke="#14148c"/>
<path d="M592.2 87.5 L603.8 120.3 M593.5 87.5 L599.5 101 M592.2 87.5 L594.5 108 L589.5 113 M594.5 108 L602 120 M601 103.3 H609.8 L604.5 109.8" stroke-width="0.8" stroke="#3a4aa8"/>
<circle cx="589.3" cy="113.5" r="2.3" stroke="#5a68b8" stroke-width="0.8"/>
<path d="M583.5 123 L588.5 119.5 L590 116 M588.5 119.5 L593 123" stroke-width="0.9"/>
<path d="M612.6 97.4 A16 16 0 0 1 616.5 106.2 M615 94.2 A20 20 0 0 1 620.4 107.3" stroke="#d01818" stroke-width="1.6"/>
</g>
<text x="575.1" y="130.1" font-family="Liberation Serif, Times New Roman, serif" font-size="7.4" font-weight="bold" textLength="50.6" lengthAdjust="spacingAndGlyphs" stroke-width="0.25"><tspan fill="#d01818" stroke="#d01818">DX</tspan><tspan fill="#14146c" stroke="#14146c">SATCS.COM</tspan></text>
<rect x="1051.5" y="97.5" width="141.5" height="639.5" fill="none" stroke="#dcdcdc" stroke-width="1"/>
<rect x="1056.0" y="92.0" width="92.0" height="10.0" fill="#f0f0f0"/>
<text x="1058.5" y="101.0" font-family="Liberation Sans, Arial, sans-serif" font-size="11.0" font-weight="normal" font-style="normal" fill="#1c1cc0" textLength="86.0" lengthAdjust="spacingAndGlyphs" stroke="#1414c0" stroke-width="0.4">Transponder (AU) [BS]</text>
<text x="1058.3" y="128.0" font-family="Liberation Sans, Arial, sans-serif" font-size="10.6" font-weight="normal" font-style="normal" fill="#1a1a1a" textLength="43.7" lengthAdjust="spacingAndGlyphs" stroke="#1a1a1a" stroke-width="0.35">Frequency:</text>
<text x="1120.5" y="128.0" font-family="Liberation Sans, Arial, sans-serif" font-size="10.6" font-weight="bold" font-style="normal" fill="#0a640a" textLength="60.5" lengthAdjust="spacingAndGlyphs">11090,872 MHz</text>
<text x="1058.3" y="161.4" font-family="Liberation Sans, Arial, sans-serif" font-size="10.6" font-weight="normal" font-style="normal" fill="#1a1a1a" textLength="50.3" lengthAdjust="spacingAndGlyphs" stroke="#1a1a1a" stroke-width="0.35">Polarization:</text>
<text x="1120.5" y="161.4" font-family="Liberation Sans, Arial, sans-serif" font-size="10.6" font-weight="bold" font-style="normal" fill="#0a640a" textLength="42.5" lengthAdjust="spacingAndGlyphs">Horizontal</text>
<text x="1058.3" y="194.9" font-family="Liberation Sans, Arial, sans-serif" font-size="10.6" font-weight="normal" font-style="normal" fill="#1a1a1a" textLength="51.7" lengthAdjust="spacingAndGlyphs" stroke="#1a1a1a" stroke-width="0.35">Symbol Rate:</text>
<text x="1120.5" y="194.9" font-family="Liberation Sans, Arial, sans-serif" font-size="10.6" font-weight="bold" font-style="normal" fill="#0a640a" textLength="55.9" lengthAdjust="spacingAndGlyphs">4499,511 KS/s</text>
<text x="1058.3" y="228.4" font-family="Liberation Sans, Arial, sans-serif" font-size="10.6" font-weight="normal" font-style="normal" fill="#1a1a1a" textLength="38.7" lengthAdjust="spacingAndGlyphs" stroke="#1a1a1a" stroke-width="0.35">Standard:</text>
<text x="1120.5" y="228.4" font-family="Liberation Sans, Arial, sans-serif" font-size="10.6" font-weight="bold" font-style="normal" fill="#0a640a" textLength="25.0" lengthAdjust="spacingAndGlyphs">DVB-S</text>
<text x="1058.3" y="261.8" font-family="Liberation Sans, Arial, sans-serif" font-size="10.6" font-weight="normal" font-style="normal" fill="#1a1a1a" textLength="50.3" lengthAdjust="spacingAndGlyphs" stroke="#1a1a1a" stroke-width="0.35">Modulation:</text>
<text x="1120.5" y="261.8" font-family="Liberation Sans, Arial, sans-serif" font-size="10.6" font-weight="bold" font-style="normal" fill="#0a640a" textLength="21.5" lengthAdjust="spacingAndGlyphs">QPSK</text>
<text x="1058.3" y="295.2" font-family="Liberation Sans, Arial, sans-serif" font-size="10.6" font-weight="normal" font-style="normal" fill="#1a1a1a" textLength="17.3" lengthAdjust="spacingAndGlyphs" stroke="#1a1a1a" stroke-width="0.35">FEC:</text>
<text x="1120.5" y="295.2" font-family="Liberation Sans, Arial, sans-serif" font-size="10.6" font-weight="bold" font-style="normal" fill="#0a640a" textLength="12.5" lengthAdjust="spacingAndGlyphs">1/2</text>
<text x="1058.3" y="328.7" font-family="Liberation Sans, Arial, sans-serif" font-size="10.6" font-weight="normal" font-style="normal" fill="#1a1a1a" textLength="31.7" lengthAdjust="spacingAndGlyphs" stroke="#1a1a1a" stroke-width="0.35">RollOff:</text>
<text x="1120.5" y="328.7" font-family="Liberation Sans, Arial, sans-serif" font-size="10.6" font-weight="bold" font-style="normal" fill="#0a640a" textLength="16.1" lengthAdjust="spacingAndGlyphs">0.35</text>
<text x="1058.3" y="362.2" font-family="Liberation Sans, Arial, sans-serif" font-size="10.6" font-weight="normal" font-style="normal" fill="#1a1a1a" textLength="20.7" lengthAdjust="spacingAndGlyphs" stroke="#1a1a1a" stroke-width="0.35">Pilot:</text>
<text x="1120.5" y="362.2" font-family="Liberation Sans, Arial, sans-serif" font-size="10.6" font-weight="normal" font-style="normal" fill="#222" textLength="15.3" lengthAdjust="spacingAndGlyphs" stroke="#222" stroke-width="0.3">OFF</text>
<text x="1058.3" y="395.6" font-family="Liberation Sans, Arial, sans-serif" font-size="10.6" font-weight="normal" font-style="normal" fill="#1a1a1a" textLength="39.7" lengthAdjust="spacingAndGlyphs" stroke="#1a1a1a" stroke-width="0.35">Spectrum:</text>
<text x="1120.5" y="395.6" font-family="Liberation Sans, Arial, sans-serif" font-size="10.6" font-weight="bold" font-style="normal" fill="#0a640a" textLength="33.1" lengthAdjust="spacingAndGlyphs">Inverted</text>
<text x="1058.3" y="429.1" font-family="Liberation Sans, Arial, sans-serif" font-size="10.6" font-weight="normal" font-style="normal" fill="#1a1a1a" textLength="47.4" lengthAdjust="spacingAndGlyphs" stroke="#1a1a1a" stroke-width="0.35">Frame Type:</text>
<text x="1120.5" y="429.1" font-family="Liberation Sans, Arial, sans-serif" font-size="10.6" font-weight="normal" font-style="normal" fill="#222" textLength="48.3" lengthAdjust="spacingAndGlyphs" stroke="#222" stroke-width="0.3">Long Frame</text>
<text x="1058.3" y="462.5" font-family="Liberation Sans, Arial, sans-serif" font-size="10.6" font-weight="normal" font-style="normal" fill="#1a1a1a" textLength="49.5" lengthAdjust="spacingAndGlyphs" stroke="#1a1a1a" stroke-width="0.35">Code Mode:</text>
<text x="1120.5" y="462.5" font-family="Liberation Sans, Arial, sans-serif" font-size="10.6" font-weight="normal" font-style="normal" fill="#222" textLength="19.5" lengthAdjust="spacingAndGlyphs" stroke="#222" stroke-width="0.3">CCM</text>
<text x="1058.3" y="496.0" font-family="Liberation Sans, Arial, sans-serif" font-size="10.6" font-weight="normal" font-style="normal" fill="#1a1a1a" textLength="49.5" lengthAdjust="spacingAndGlyphs" stroke="#1a1a1a" stroke-width="0.35">Stream type:</text>
<text x="1120.5" y="496.0" font-family="Liberation Sans, Arial, sans-serif" font-size="10.6" font-weight="normal" font-style="normal" fill="#222" textLength="38.1" lengthAdjust="spacingAndGlyphs" stroke="#222" stroke-width="0.3">Transport</text>
<text x="1058.3" y="529.4" font-family="Liberation Sans, Arial, sans-serif" font-size="10.6" font-weight="normal" font-style="normal" fill="#1a1a1a" textLength="17.7" lengthAdjust="spacingAndGlyphs" stroke="#1a1a1a" stroke-width="0.35">ISSYI</text>
<text x="1120.5" y="529.4" font-family="Liberation Sans, Arial, sans-serif" font-size="10.6" font-weight="normal" font-style="normal" fill="#222" textLength="15.3" lengthAdjust="spacingAndGlyphs" stroke="#222" stroke-width="0.3">OFF</text>
<text x="1058.3" y="562.9" font-family="Liberation Sans, Arial, sans-serif" font-size="10.6" font-weight="normal" font-style="normal" fill="#1a1a1a" textLength="19.7" lengthAdjust="spacingAndGlyphs" stroke="#1a1a1a" stroke-width="0.35">NPD:</text>
<text x="1120.5" y="562.9" font-family="Liberation Sans, Arial, sans-serif" font-size="10.6" font-weight="normal" font-style="normal" fill="#222" textLength="15.3" lengthAdjust="spacingAndGlyphs" stroke="#222" stroke-width="0.3">OFF</text>
<text x="1058.3" y="596.3" font-family="Liberation Sans, Arial, sans-serif" font-size="10.6" font-weight="normal" font-style="normal" fill="#1a1a1a" textLength="34.7" lengthAdjust="spacingAndGlyphs" stroke="#1a1a1a" stroke-width="0.35">RF Level:</text>
<text x="1120.5" y="596.3" font-family="Liberation Sans, Arial, sans-serif" font-size="10.6" font-weight="bold" font-style="normal" fill="#0a640a" textLength="33.1" lengthAdjust="spacingAndGlyphs">-47 dBm</text>
<text x="1058.3" y="629.8" font-family="Liberation Sans, Arial, sans-serif" font-size="10.6" font-weight="normal" font-style="normal" fill="#1a1a1a" textLength="31.3" lengthAdjust="spacingAndGlyphs" stroke="#1a1a1a" stroke-width="0.35">BitRate:</text>
<text x="1120.5" y="629.8" font-family="Liberation Sans, Arial, sans-serif" font-size="10.6" font-weight="bold" font-style="normal" fill="#0a640a" textLength="50.9" lengthAdjust="spacingAndGlyphs">3,946 Mbit/s</text>
<text x="1058.3" y="663.2" font-family="Liberation Sans, Arial, sans-serif" font-size="10.6" font-weight="normal" font-style="normal" fill="#1a1a1a" textLength="53.7" lengthAdjust="spacingAndGlyphs" stroke="#1a1a1a" stroke-width="0.35">CarrierWidth:</text>
<text x="1120.5" y="663.2" font-family="Liberation Sans, Arial, sans-serif" font-size="10.6" font-weight="bold" font-style="normal" fill="#0a640a" textLength="42.5" lengthAdjust="spacingAndGlyphs">6,073 MHz</text>
<text x="1058.3" y="709.0" font-family="Liberation Sans, Arial, sans-serif" font-size="10.6" font-weight="normal" font-style="normal" fill="#1a1a1a" textLength="29.2" lengthAdjust="spacingAndGlyphs" stroke="#1a1a1a" stroke-width="0.2">MIS (0):</text>
<rect x="1120.5" y="696.0" width="58.0" height="18.5" fill="#fbfbfb" stroke="#e2e2e2" stroke-width="1" rx="1.5"/>
<text x="1123.5" y="709.0" font-family="Liberation Sans, Arial, sans-serif" font-size="10.6" font-weight="normal" font-style="normal" fill="#222" textLength="24.5" lengthAdjust="spacingAndGlyphs">Single</text>
<path d="M1167 703.5 l3.8 4 l3.8 -4" fill="none" stroke="#666" stroke-width="0.9"/>
<rect x="1052.5" y="746.0" width="139.5" height="24.0" fill="#fdfdfd" stroke="#d0d0d0" stroke-width="1" rx="3.5"/>
<g><rect x="1115.5" y="750" width="13" height="15" fill="#f4f4f4" stroke="#9a9a9a" stroke-width="0.8" rx="1"/><rect x="1116" y="753.5" width="12" height="3.6" fill="#2a6ad8"/><rect x="1116.5" y="759.5" width="11" height="1.2" fill="#9ab"/><rect x="1116.5" y="762" width="11" height="1.2" fill="#9ab"/></g>
<rect x="9.7" y="781.3" width="97.3" height="18.8" fill="url(#gGreen)" stroke="#9c9c9c" stroke-width="1" rx="1.5"/>
<rect x="1093.3" y="781.3" width="98.5" height="18.8" fill="url(#gGreen)" stroke="#9c9c9c" stroke-width="1" rx="1.5"/>
<rect x="9.7" y="805.0" width="97.3" height="18.8" fill="url(#gGreen)" stroke="#9c9c9c" stroke-width="1" rx="1.5"/>
<rect x="1093.3" y="805.0" width="98.5" height="18.8" fill="url(#gGreen)" stroke="#9c9c9c" stroke-width="1" rx="1.5"/>
<rect x="111.3" y="781.3" width="487.0" height="18.8" fill="url(#gGray)" stroke="#9c9c9c" stroke-width="1" rx="1.5"/>
<rect x="111.8" y="781.9" width="48.4" height="17.6" fill="url(#gRed)"/>
<rect x="160.2" y="781.9" width="29.3" height="17.6" fill="url(#gYel)"/>
<rect x="111.3" y="805.0" width="487.0" height="18.8" fill="url(#gGray)" stroke="#9c9c9c" stroke-width="1" rx="1.5"/>
<rect x="111.8" y="805.6" width="48.4" height="17.6" fill="url(#gRed)"/>
<rect x="160.2" y="805.6" width="146.5" height="17.6" fill="url(#gYel)"/>
<rect x="602.5" y="781.3" width="240.5" height="18.8" fill="url(#gGray)" stroke="#9c9c9c" stroke-width="1" rx="1.5"/>
<rect x="603.0" y="781.9" width="18.0" height="17.6" fill="url(#gRed)"/>
<rect x="847.5" y="781.3" width="242.5" height="18.8" fill="url(#gGray)" stroke="#9c9c9c" stroke-width="1" rx="1.5"/>
<rect x="848.0" y="781.9" width="52.0" height="17.6" fill="url(#gRed)"/>
<rect x="900.0" y="781.9" width="17.3" height="17.6" fill="url(#gYel)"/>
<rect x="602.5" y="805.0" width="487.5" height="18.8" fill="url(#gGray)" stroke="#9c9c9c" stroke-width="1" rx="1.5"/>
<rect x="603.0" y="805.6" width="65.7" height="17.6" fill="url(#gRed)"/>
<rect x="668.7" y="805.6" width="15.2" height="17.6" fill="url(#gYel)"/>
<text x="11.3" y="795.0" font-family="Liberation Sans, Arial, sans-serif" font-size="11.0" font-weight="normal" font-style="normal" fill="#111" textLength="29.2" lengthAdjust="spacingAndGlyphs" stroke="#111" stroke-width="0.45">Present</text>
<text x="11.3" y="819.0" font-family="Liberation Sans, Arial, sans-serif" font-size="11.0" font-weight="normal" font-style="normal" fill="#111" textLength="17.9" lengthAdjust="spacingAndGlyphs" stroke="#111" stroke-width="0.45">Lock</text>
<text x="115.5" y="795.0" font-family="Liberation Sans, Arial, sans-serif" font-size="11.0" font-weight="normal" font-style="normal" fill="#111" textLength="39.5" lengthAdjust="spacingAndGlyphs" stroke="#111" stroke-width="0.45">Level: 16%</text>
<text x="115.5" y="819.0" font-family="Liberation Sans, Arial, sans-serif" font-size="11.0" font-weight="normal" font-style="normal" fill="#111" textLength="48.7" lengthAdjust="spacingAndGlyphs" stroke="#111" stroke-width="0.45">Quality: 40%</text>
<text x="604.7" y="795.3" font-family="Liberation Sans, Arial, sans-serif" font-size="11.0" font-weight="normal" font-style="normal" fill="#111" textLength="56.1" lengthAdjust="spacingAndGlyphs" stroke="#111" stroke-width="0.45">preBER: 7,0E-1</text>
<text x="606.7" y="819.3" font-family="Liberation Sans, Arial, sans-serif" font-size="11.0" font-weight="normal" font-style="normal" fill="#111" textLength="157.8" lengthAdjust="spacingAndGlyphs" stroke="#111" stroke-width="0.45">SNR: 3,3 dB (Margin: 0,6 dB | Very Poor)</text>
<text x="850.0" y="795.3" font-family="Liberation Sans, Arial, sans-serif" font-size="11.0" font-weight="normal" font-style="normal" fill="#111" textLength="42.7" lengthAdjust="spacingAndGlyphs" stroke="#111" stroke-width="0.45">BER: 1,4E-2</text>
<text x="1096.0" y="795.3" font-family="Liberation Sans, Arial, sans-serif" font-size="11.0" font-weight="normal" font-style="normal" fill="#111" textLength="76.3" lengthAdjust="spacingAndGlyphs" stroke="#111" stroke-width="0.45">Input (~3,95 Mbps)</text>
<text x="1096.0" y="819.3" font-family="Liberation Sans, Arial, sans-serif" font-size="11.0" font-weight="normal" font-style="normal" fill="#111" textLength="29.7" lengthAdjust="spacingAndGlyphs" stroke="#111" stroke-width="0.45">Sync TS</text>
<line x1="2.0" y1="830.5" x2="1199.0" y2="830.5" stroke="#d4d4d4" stroke-width="1"/>
<line x1="392.0" y1="833.0" x2="392.0" y2="850.0" stroke="#d8d8d8" stroke-width="1"/>
<line x1="791.7" y1="833.0" x2="791.7" y2="850.0" stroke="#d8d8d8" stroke-width="1"/>
<line x1="1188.0" y1="833.0" x2="1188.0" y2="850.0" stroke="#d8d8d8" stroke-width="1"/>
<text x="141.7" y="846.3" font-family="Liberation Sans, Arial, sans-serif" font-size="11.8" font-weight="normal" font-style="normal" fill="#111" textLength="114.3" lengthAdjust="spacingAndGlyphs" stroke="#111" stroke-width="0.5">Locked -&gt; Uptime: 57:18:56</text>
<text x="539.0" y="846.3" font-family="Liberation Sans, Arial, sans-serif" font-size="11.8" font-weight="normal" font-style="normal" fill="#111" textLength="111.8" lengthAdjust="spacingAndGlyphs" stroke="#111" stroke-width="0.5">SYNC 2 | TEI 327 | CC 2638</text>
<text x="911.0" y="846.3" font-family="Liberation Sans, Arial, sans-serif" font-size="11.8" font-weight="normal" font-style="normal" fill="#111" textLength="160.0" lengthAdjust="spacingAndGlyphs" stroke="#111" stroke-width="0.5">Best signal: 6,9 dB (2024-06-03 00:13)</text>
<g fill="#999"><rect x="1194" y="846" width="1.5" height="1.5"/><rect x="1197" y="846" width="1.5" height="1.5"/><rect x="1197" y="843" width="1.5" height="1.5"/></g>
</svg>
</body></html>
